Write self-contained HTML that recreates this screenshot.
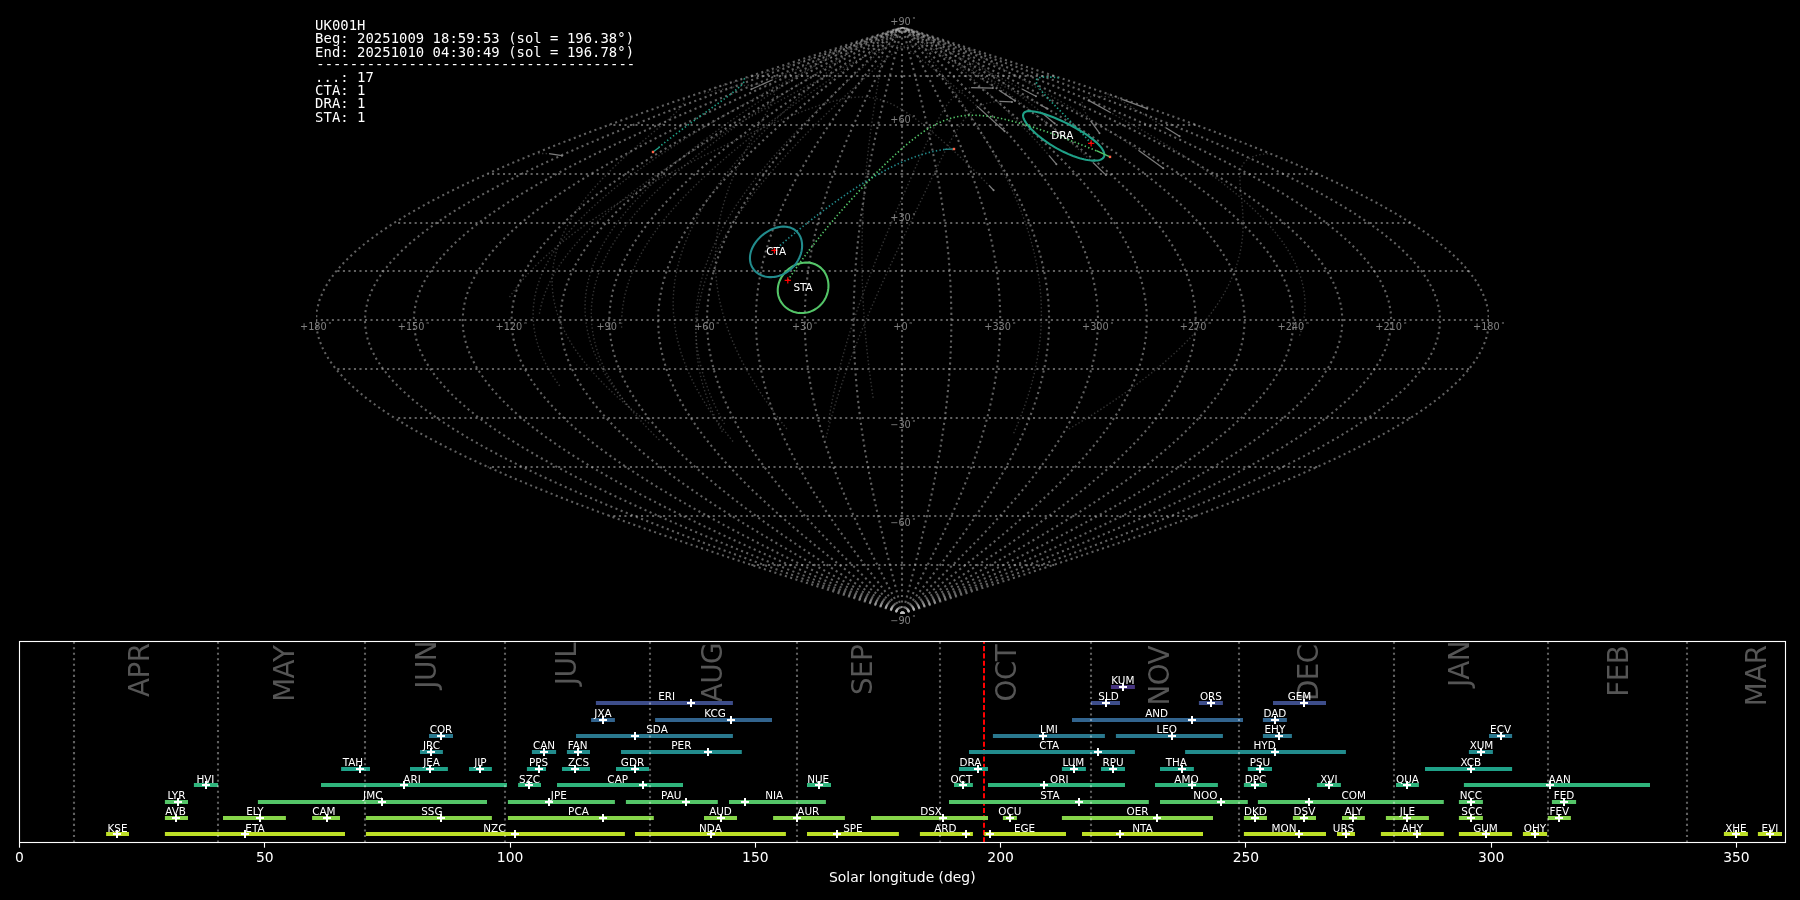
<!DOCTYPE html>
<html lang="en"><head><meta charset="utf-8"><title>UK001H shower association</title>
<style>
html,body{margin:0;padding:0;background:#000;}
body{width:1800px;height:900px;overflow:hidden;}
svg{display:block;will-change:transform;}
</style></head><body>
<svg width="1800" height="900" viewBox="0 0 1800 900">
<defs><clipPath id="skyclip"><rect x="316" y="27.5" width="1173" height="586.5"/></clipPath></defs>
<rect width="1800" height="900" fill="#000000"/>
<g id="skygrid" fill="none" stroke="#c0c0c0" stroke-opacity="0.5" stroke-width="2.08" stroke-dasharray="2.08 3.44" clip-path="url(#skyclip)">
<path d="M902 613.55 L902 603.77 L902 594 L902 584.22 L902 574.45 L902 564.67 L902 554.9 L902 545.12 L902 535.35 L902 525.57 L902 515.8 L902 506.02 L902 496.25 L902 486.47 L902 476.7 L902 466.92 L902 457.15 L902 447.37 L902 437.6 L902 427.82 L902 418.05 L902 408.27 L902 398.5 L902 388.72 L902 378.95 L902 369.17 L902 359.4 L902 349.62 L902 339.85 L902 330.07 L902 320.3 L902 310.53 L902 300.75 L902 290.98 L902 281.2 L902 271.43 L902 261.65 L902 251.88 L902 242.1 L902 232.33 L902 222.55 L902 212.78 L902 203 L902 193.23 L902 183.45 L902 173.68 L902 163.9 L902 154.13 L902 144.35 L902 134.58 L902 124.8 L902 115.03 L902 105.25 L902 95.48 L902 85.7 L902 75.93 L902 66.15 L902 56.38 L902 46.6 L902 36.83 L902 27.05"/>
<path d="M902.5 613.55 L899.94 603.77 L897.39 594 L894.85 584.22 L892.34 574.45 L889.85 564.67 L887.4 554.9 L884.98 545.12 L882.62 535.35 L880.31 525.57 L878.06 515.8 L875.88 506.02 L873.77 496.25 L871.74 486.47 L869.8 476.7 L867.94 466.92 L866.18 457.15 L864.52 447.37 L862.96 437.6 L861.51 427.82 L860.17 418.05 L858.95 408.27 L857.85 398.5 L856.87 388.72 L856.02 378.95 L855.29 369.17 L854.69 359.4 L854.23 349.62 L853.89 339.85 L853.69 330.07 L853.63 320.3 L853.69 310.53 L853.89 300.75 L854.23 290.98 L854.69 281.2 L855.29 271.43 L856.02 261.65 L856.87 251.88 L857.85 242.1 L858.95 232.33 L860.17 222.55 L861.51 212.78 L862.96 203 L864.52 193.23 L866.18 183.45 L867.94 173.68 L869.8 163.9 L871.74 154.13 L873.77 144.35 L875.88 134.58 L878.06 124.8 L880.31 115.03 L882.62 105.25 L884.98 95.48 L887.4 85.7 L889.85 75.93 L892.34 66.15 L894.85 56.38 L897.39 46.6 L899.94 36.83 L902.5 27.05"/>
<path d="M902.5 613.55 L897.38 603.77 L892.28 594 L887.21 584.22 L882.18 574.45 L877.2 564.67 L872.29 554.9 L867.47 545.12 L862.74 535.35 L858.12 525.57 L853.63 515.8 L849.26 506.02 L845.04 496.25 L840.98 486.47 L837.09 476.7 L833.38 466.92 L829.86 457.15 L826.53 447.37 L823.42 437.6 L820.52 427.82 L817.85 418.05 L815.41 408.27 L813.2 398.5 L811.24 388.72 L809.54 378.95 L808.08 369.17 L806.89 359.4 L805.95 349.62 L805.29 339.85 L804.88 330.07 L804.75 320.3 L804.88 310.53 L805.29 300.75 L805.95 290.98 L806.89 281.2 L808.08 271.43 L809.54 261.65 L811.24 251.88 L813.2 242.1 L815.41 232.33 L817.85 222.55 L820.52 212.78 L823.42 203 L826.53 193.23 L829.86 183.45 L833.38 173.68 L837.09 163.9 L840.98 154.13 L845.04 144.35 L849.26 134.58 L853.63 124.8 L858.12 115.03 L862.74 105.25 L867.47 95.48 L872.29 85.7 L877.2 75.93 L882.18 66.15 L887.21 56.38 L892.28 46.6 L897.38 36.83 L902.5 27.05"/>
<path d="M902.5 613.55 L894.83 603.77 L887.17 594 L879.56 584.22 L872.02 574.45 L864.55 564.67 L857.19 554.9 L849.95 545.12 L842.86 535.35 L835.93 525.57 L829.19 515.8 L822.64 506.02 L816.32 496.25 L810.23 486.47 L804.39 476.7 L798.82 466.92 L793.54 457.15 L788.55 447.37 L783.88 437.6 L779.53 427.82 L775.52 418.05 L771.86 408.27 L768.55 398.5 L765.62 388.72 L763.05 378.95 L760.87 369.17 L759.08 359.4 L757.68 349.62 L756.68 339.85 L756.08 330.07 L755.88 320.3 L756.08 310.53 L756.68 300.75 L757.68 290.98 L759.08 281.2 L760.87 271.43 L763.05 261.65 L765.62 251.88 L768.55 242.1 L771.86 232.33 L775.52 222.55 L779.53 212.78 L783.88 203 L788.55 193.23 L793.54 183.45 L798.82 173.68 L804.39 163.9 L810.23 154.13 L816.32 144.35 L822.64 134.58 L829.19 124.8 L835.93 115.03 L842.86 105.25 L849.95 95.48 L857.19 85.7 L864.55 75.93 L872.02 66.15 L879.56 56.38 L887.17 46.6 L894.83 36.83 L902.5 27.05"/>
<path d="M902.5 613.55 L892.27 603.77 L882.06 594 L871.92 584.22 L861.85 574.45 L851.9 564.67 L842.09 554.9 L832.44 545.12 L822.98 535.35 L813.75 525.57 L804.75 515.8 L796.02 506.02 L787.59 496.25 L779.47 486.47 L771.69 476.7 L764.26 466.92 L757.22 457.15 L750.57 447.37 L744.34 437.6 L738.54 427.82 L733.19 418.05 L728.31 408.27 L723.9 398.5 L719.99 388.72 L716.57 378.95 L713.66 369.17 L711.27 359.4 L709.41 349.62 L708.07 339.85 L707.27 330.07 L707 320.3 L707.27 310.53 L708.07 300.75 L709.41 290.98 L711.27 281.2 L713.66 271.43 L716.57 261.65 L719.99 251.88 L723.9 242.1 L728.31 232.33 L733.19 222.55 L738.54 212.78 L744.34 203 L750.57 193.23 L757.22 183.45 L764.26 173.68 L771.69 163.9 L779.47 154.13 L787.59 144.35 L796.02 134.58 L804.75 124.8 L813.75 115.03 L822.98 105.25 L832.44 95.48 L842.09 85.7 L851.9 75.93 L861.85 66.15 L871.92 56.38 L882.06 46.6 L892.27 36.83 L902.5 27.05"/>
<path d="M902.5 613.55 L889.71 603.77 L876.96 594 L864.27 584.22 L851.69 574.45 L839.25 564.67 L826.98 554.9 L814.92 545.12 L803.1 535.35 L791.56 525.57 L780.31 515.8 L769.41 506.02 L758.86 496.25 L748.71 486.47 L738.98 476.7 L729.7 466.92 L720.9 457.15 L712.59 447.37 L704.8 437.6 L697.55 427.82 L690.87 418.05 L684.76 408.27 L679.25 398.5 L674.36 388.72 L670.09 378.95 L666.45 369.17 L663.47 359.4 L661.14 349.62 L659.47 339.85 L658.46 330.07 L658.13 320.3 L658.46 310.53 L659.47 300.75 L661.14 290.98 L663.47 281.2 L666.45 271.43 L670.09 261.65 L674.36 251.88 L679.25 242.1 L684.76 232.33 L690.87 222.55 L697.55 212.78 L704.8 203 L712.59 193.23 L720.9 183.45 L729.7 173.68 L738.98 163.9 L748.71 154.13 L758.86 144.35 L769.41 134.58 L780.31 124.8 L791.56 115.03 L803.1 105.25 L814.92 95.48 L826.98 85.7 L839.25 75.93 L851.69 66.15 L864.27 56.38 L876.96 46.6 L889.71 36.83 L902.5 27.05"/>
<path d="M902.5 613.55 L887.15 603.77 L871.85 594 L856.63 584.22 L841.53 574.45 L826.6 564.67 L811.88 554.9 L797.41 545.12 L783.23 535.35 L769.37 525.57 L755.88 515.8 L742.79 506.02 L730.13 496.25 L717.95 486.47 L706.28 476.7 L695.14 466.92 L684.58 457.15 L674.6 447.37 L665.26 437.6 L656.56 427.82 L648.54 418.05 L641.22 408.27 L634.61 398.5 L628.73 388.72 L623.61 378.95 L619.25 369.17 L615.66 359.4 L612.86 349.62 L610.86 339.85 L609.65 330.07 L609.25 320.3 L609.65 310.53 L610.86 300.75 L612.86 290.98 L615.66 281.2 L619.25 271.43 L623.61 261.65 L628.73 251.88 L634.61 242.1 L641.22 232.33 L648.54 222.55 L656.56 212.78 L665.26 203 L674.6 193.23 L684.58 183.45 L695.14 173.68 L706.28 163.9 L717.95 154.13 L730.13 144.35 L742.79 134.58 L755.88 124.8 L769.37 115.03 L783.23 105.25 L797.41 95.48 L811.88 85.7 L826.6 75.93 L841.53 66.15 L856.63 56.38 L871.85 46.6 L887.15 36.83 L902.5 27.05"/>
<path d="M902.5 613.55 L884.59 603.77 L866.74 594 L848.98 584.22 L831.37 574.45 L813.95 564.67 L796.78 554.9 L779.89 545.12 L763.35 535.35 L747.18 525.57 L731.44 515.8 L716.17 506.02 L701.41 496.25 L687.2 486.47 L673.58 476.7 L660.58 466.92 L648.25 457.15 L636.62 447.37 L625.72 437.6 L615.57 427.82 L606.21 418.05 L597.67 408.27 L589.96 398.5 L583.1 388.72 L577.12 378.95 L572.04 369.17 L567.85 359.4 L564.59 349.62 L562.25 339.85 L560.85 330.07 L560.38 320.3 L560.85 310.53 L562.25 300.75 L564.59 290.98 L567.85 281.2 L572.04 271.43 L577.12 261.65 L583.1 251.88 L589.96 242.1 L597.67 232.33 L606.21 222.55 L615.57 212.78 L625.72 203 L636.62 193.23 L648.25 183.45 L660.58 173.68 L673.58 163.9 L687.2 154.13 L701.41 144.35 L716.17 134.58 L731.44 124.8 L747.18 115.03 L763.35 105.25 L779.89 95.48 L796.78 85.7 L813.95 75.93 L831.37 66.15 L848.98 56.38 L866.74 46.6 L884.59 36.83 L902.5 27.05"/>
<path d="M902.5 613.55 L882.04 603.77 L861.63 594 L841.33 584.22 L821.21 574.45 L801.3 564.67 L781.68 554.9 L762.38 545.12 L743.47 535.35 L724.99 525.57 L707 515.8 L689.55 506.02 L672.68 496.25 L656.44 486.47 L640.87 476.7 L626.02 466.92 L611.93 457.15 L598.64 447.37 L586.18 437.6 L574.58 427.82 L563.89 418.05 L554.12 408.27 L545.31 398.5 L537.47 388.72 L530.64 378.95 L524.83 369.17 L520.05 359.4 L516.32 349.62 L513.65 339.85 L512.04 330.07 L511.5 320.3 L512.04 310.53 L513.65 300.75 L516.32 290.98 L520.05 281.2 L524.83 271.43 L530.64 261.65 L537.47 251.88 L545.31 242.1 L554.12 232.33 L563.89 222.55 L574.58 212.78 L586.18 203 L598.64 193.23 L611.93 183.45 L626.02 173.68 L640.87 163.9 L656.44 154.13 L672.68 144.35 L689.55 134.58 L707 124.8 L724.99 115.03 L743.47 105.25 L762.38 95.48 L781.68 85.7 L801.3 75.93 L821.21 66.15 L841.33 56.38 L861.63 46.6 L882.04 36.83 L902.5 27.05"/>
<path d="M902.5 613.55 L879.48 603.77 L856.52 594 L833.69 584.22 L811.05 574.45 L788.65 564.67 L766.57 554.9 L744.86 545.12 L723.59 535.35 L702.8 525.57 L682.56 515.8 L662.93 506.02 L643.95 496.25 L625.68 486.47 L608.17 476.7 L591.46 466.92 L575.61 457.15 L560.66 447.37 L546.64 437.6 L533.59 427.82 L521.56 418.05 L510.57 408.27 L500.66 398.5 L491.85 388.72 L484.16 378.95 L477.62 369.17 L472.24 359.4 L468.05 349.62 L465.04 339.85 L463.23 330.07 L462.63 320.3 L463.23 310.53 L465.04 300.75 L468.05 290.98 L472.24 281.2 L477.62 271.43 L484.16 261.65 L491.85 251.88 L500.66 242.1 L510.57 232.33 L521.56 222.55 L533.59 212.78 L546.64 203 L560.66 193.23 L575.61 183.45 L591.46 173.68 L608.17 163.9 L625.68 154.13 L643.95 144.35 L662.93 134.58 L682.56 124.8 L702.8 115.03 L723.59 105.25 L744.86 95.48 L766.57 85.7 L788.65 75.93 L811.05 66.15 L833.69 56.38 L856.52 46.6 L879.48 36.83 L902.5 27.05"/>
<path d="M902.5 613.55 L876.92 603.77 L851.41 594 L826.04 584.22 L800.88 574.45 L776 564.67 L751.47 554.9 L727.35 545.12 L703.71 535.35 L680.61 525.57 L658.13 515.8 L636.31 506.02 L615.22 496.25 L594.92 486.47 L575.47 476.7 L556.91 466.92 L539.29 457.15 L522.67 447.37 L507.1 437.6 L492.6 427.82 L479.23 418.05 L467.03 408.27 L456.01 398.5 L446.22 388.72 L437.68 378.95 L430.41 369.17 L424.44 359.4 L419.77 349.62 L416.43 339.85 L414.42 330.07 L413.75 320.3 L414.42 310.53 L416.43 300.75 L419.77 290.98 L424.44 281.2 L430.41 271.43 L437.68 261.65 L446.22 251.88 L456.01 242.1 L467.03 232.33 L479.23 222.55 L492.6 212.78 L507.1 203 L522.67 193.23 L539.29 183.45 L556.91 173.68 L575.47 163.9 L594.92 154.13 L615.22 144.35 L636.31 134.58 L658.13 124.8 L680.61 115.03 L703.71 105.25 L727.35 95.48 L751.47 85.7 L776 75.93 L800.88 66.15 L826.04 56.38 L851.41 46.6 L876.92 36.83 L902.5 27.05"/>
<path d="M902.5 613.55 L874.36 603.77 L846.3 594 L818.4 584.22 L790.72 574.45 L763.35 564.67 L736.37 554.9 L709.83 545.12 L683.83 535.35 L658.43 525.57 L633.69 515.8 L609.69 506.02 L586.5 496.25 L564.17 486.47 L542.76 476.7 L522.35 466.92 L502.97 457.15 L484.69 447.37 L467.56 437.6 L451.61 427.82 L436.91 418.05 L423.48 408.27 L411.36 398.5 L400.59 388.72 L391.19 378.95 L383.2 369.17 L376.63 359.4 L371.5 349.62 L367.83 339.85 L365.62 330.07 L364.88 320.3 L365.62 310.53 L367.83 300.75 L371.5 290.98 L376.63 281.2 L383.2 271.43 L391.19 261.65 L400.59 251.88 L411.36 242.1 L423.48 232.33 L436.91 222.55 L451.61 212.78 L467.56 203 L484.69 193.23 L502.97 183.45 L522.35 173.68 L542.76 163.9 L564.17 154.13 L586.5 144.35 L609.69 134.58 L633.69 124.8 L658.43 115.03 L683.83 105.25 L709.83 95.48 L736.37 85.7 L763.35 75.93 L790.72 66.15 L818.4 56.38 L846.3 46.6 L874.36 36.83 L902.5 27.05"/>
<path d="M902.5 613.55 L871.81 603.77 L841.19 594 L810.75 584.22 L780.56 574.45 L750.7 564.67 L721.26 554.9 L692.32 545.12 L663.95 535.35 L636.24 525.57 L609.25 515.8 L583.07 506.02 L557.77 496.25 L533.41 486.47 L510.06 476.7 L487.79 466.92 L466.65 457.15 L446.71 447.37 L428.02 437.6 L410.62 427.82 L394.58 418.05 L379.93 408.27 L366.71 398.5 L354.96 388.72 L344.71 378.95 L335.99 369.17 L328.82 359.4 L323.23 349.62 L319.22 339.85 L316.81 330.07 L316.01 320.3 L316.81 310.53 L319.22 300.75 L323.23 290.98 L328.82 281.2 L335.99 271.43 L344.71 261.65 L354.96 251.88 L366.71 242.1 L379.93 232.33 L394.58 222.55 L410.62 212.78 L428.02 203 L446.71 193.23 L466.65 183.45 L487.79 173.68 L510.06 163.9 L533.41 154.13 L557.77 144.35 L583.07 134.58 L609.25 124.8 L636.24 115.03 L663.95 105.25 L692.32 95.48 L721.26 85.7 L750.7 75.93 L780.56 66.15 L810.75 56.38 L841.19 46.6 L871.81 36.83 L902.5 27.05"/>
<path d="M902.5 613.55 L933.19 603.77 L963.81 594 L994.25 584.22 L1024.44 574.45 L1054.3 564.67 L1083.74 554.9 L1112.68 545.12 L1141.05 535.35 L1168.76 525.57 L1195.75 515.8 L1221.93 506.02 L1247.23 496.25 L1271.59 486.47 L1294.94 476.7 L1317.21 466.92 L1338.35 457.15 L1358.29 447.37 L1376.98 437.6 L1394.37 427.82 L1410.42 418.05 L1425.07 408.27 L1438.29 398.5 L1450.04 388.72 L1460.29 378.95 L1469.01 369.17 L1476.18 359.4 L1481.77 349.62 L1485.78 339.85 L1488.19 330.07 L1488.99 320.3 L1488.19 310.53 L1485.78 300.75 L1481.77 290.98 L1476.18 281.2 L1469.01 271.43 L1460.29 261.65 L1450.04 251.88 L1438.29 242.1 L1425.07 232.33 L1410.42 222.55 L1394.37 212.78 L1376.98 203 L1358.29 193.23 L1338.35 183.45 L1317.21 173.68 L1294.94 163.9 L1271.59 154.13 L1247.23 144.35 L1221.93 134.58 L1195.75 124.8 L1168.76 115.03 L1141.05 105.25 L1112.68 95.48 L1083.74 85.7 L1054.3 75.93 L1024.44 66.15 L994.25 56.38 L963.81 46.6 L933.19 36.83 L902.5 27.05"/>
<path d="M902.5 613.55 L930.64 603.77 L958.7 594 L986.6 584.22 L1014.28 574.45 L1041.65 564.67 L1068.63 554.9 L1095.17 545.12 L1121.17 535.35 L1146.57 525.57 L1171.31 515.8 L1195.31 506.02 L1218.5 496.25 L1240.83 486.47 L1262.24 476.7 L1282.65 466.92 L1302.03 457.15 L1320.31 447.37 L1337.44 437.6 L1353.39 427.82 L1368.09 418.05 L1381.52 408.27 L1393.64 398.5 L1404.41 388.72 L1413.81 378.95 L1421.8 369.17 L1428.37 359.4 L1433.5 349.62 L1437.17 339.85 L1439.38 330.07 L1440.12 320.3 L1439.38 310.53 L1437.17 300.75 L1433.5 290.98 L1428.37 281.2 L1421.8 271.43 L1413.81 261.65 L1404.41 251.88 L1393.64 242.1 L1381.52 232.33 L1368.09 222.55 L1353.39 212.78 L1337.44 203 L1320.31 193.23 L1302.03 183.45 L1282.65 173.68 L1262.24 163.9 L1240.83 154.13 L1218.5 144.35 L1195.31 134.58 L1171.31 124.8 L1146.57 115.03 L1121.17 105.25 L1095.17 95.48 L1068.63 85.7 L1041.65 75.93 L1014.28 66.15 L986.6 56.38 L958.7 46.6 L930.64 36.83 L902.5 27.05"/>
<path d="M902.5 613.55 L928.08 603.77 L953.59 594 L978.96 584.22 L1004.12 574.45 L1029 564.67 L1053.53 554.9 L1077.65 545.12 L1101.29 535.35 L1124.39 525.57 L1146.87 515.8 L1168.69 506.02 L1189.78 496.25 L1210.08 486.47 L1229.53 476.7 L1248.09 466.92 L1265.71 457.15 L1282.33 447.37 L1297.9 437.6 L1312.4 427.82 L1325.77 418.05 L1337.97 408.27 L1348.99 398.5 L1358.78 388.72 L1367.32 378.95 L1374.59 369.17 L1380.56 359.4 L1385.23 349.62 L1388.57 339.85 L1390.58 330.07 L1391.24 320.3 L1390.58 310.53 L1388.57 300.75 L1385.23 290.98 L1380.56 281.2 L1374.59 271.43 L1367.32 261.65 L1358.78 251.88 L1348.99 242.1 L1337.97 232.33 L1325.77 222.55 L1312.4 212.78 L1297.9 203 L1282.33 193.23 L1265.71 183.45 L1248.09 173.68 L1229.53 163.9 L1210.08 154.13 L1189.78 144.35 L1168.69 134.58 L1146.87 124.8 L1124.39 115.03 L1101.29 105.25 L1077.65 95.48 L1053.53 85.7 L1029 75.93 L1004.12 66.15 L978.96 56.38 L953.59 46.6 L928.08 36.83 L902.5 27.05"/>
<path d="M902.5 613.55 L925.52 603.77 L948.48 594 L971.31 584.22 L993.95 574.45 L1016.35 564.67 L1038.43 554.9 L1060.14 545.12 L1081.41 535.35 L1102.2 525.57 L1122.44 515.8 L1142.07 506.02 L1161.05 496.25 L1179.32 486.47 L1196.83 476.7 L1213.54 466.92 L1229.39 457.15 L1244.34 447.37 L1258.36 437.6 L1271.41 427.82 L1283.44 418.05 L1294.43 408.27 L1304.34 398.5 L1313.15 388.72 L1320.84 378.95 L1327.38 369.17 L1332.76 359.4 L1336.95 349.62 L1339.96 339.85 L1341.77 330.07 L1342.37 320.3 L1341.77 310.53 L1339.96 300.75 L1336.95 290.98 L1332.76 281.2 L1327.38 271.43 L1320.84 261.65 L1313.15 251.88 L1304.34 242.1 L1294.43 232.33 L1283.44 222.55 L1271.41 212.78 L1258.36 203 L1244.34 193.23 L1229.39 183.45 L1213.54 173.68 L1196.83 163.9 L1179.32 154.13 L1161.05 144.35 L1142.07 134.58 L1122.44 124.8 L1102.2 115.03 L1081.41 105.25 L1060.14 95.48 L1038.43 85.7 L1016.35 75.93 L993.95 66.15 L971.31 56.38 L948.48 46.6 L925.52 36.83 L902.5 27.05"/>
<path d="M902.5 613.55 L922.96 603.77 L943.37 594 L963.67 584.22 L983.79 574.45 L1003.7 564.67 L1023.32 554.9 L1042.62 545.12 L1061.53 535.35 L1080.01 525.57 L1098 515.8 L1115.45 506.02 L1132.32 496.25 L1148.56 486.47 L1164.13 476.7 L1178.98 466.92 L1193.07 457.15 L1206.36 447.37 L1218.82 437.6 L1230.42 427.82 L1241.11 418.05 L1250.88 408.27 L1259.69 398.5 L1267.53 388.72 L1274.36 378.95 L1280.17 369.17 L1284.95 359.4 L1288.68 349.62 L1291.35 339.85 L1292.96 330.07 L1293.5 320.3 L1292.96 310.53 L1291.35 300.75 L1288.68 290.98 L1284.95 281.2 L1280.17 271.43 L1274.36 261.65 L1267.53 251.88 L1259.69 242.1 L1250.88 232.33 L1241.11 222.55 L1230.42 212.78 L1218.82 203 L1206.36 193.23 L1193.07 183.45 L1178.98 173.68 L1164.13 163.9 L1148.56 154.13 L1132.32 144.35 L1115.45 134.58 L1098 124.8 L1080.01 115.03 L1061.53 105.25 L1042.62 95.48 L1023.32 85.7 L1003.7 75.93 L983.79 66.15 L963.67 56.38 L943.37 46.6 L922.96 36.83 L902.5 27.05"/>
<path d="M902.5 613.55 L920.41 603.77 L938.26 594 L956.02 584.22 L973.63 574.45 L991.05 564.67 L1008.22 554.9 L1025.11 545.12 L1041.65 535.35 L1057.82 525.57 L1073.56 515.8 L1088.83 506.02 L1103.59 496.25 L1117.8 486.47 L1131.42 476.7 L1144.42 466.92 L1156.75 457.15 L1168.38 447.37 L1179.28 437.6 L1189.43 427.82 L1198.79 418.05 L1207.33 408.27 L1215.04 398.5 L1221.9 388.72 L1227.88 378.95 L1232.96 369.17 L1237.15 359.4 L1240.41 349.62 L1242.75 339.85 L1244.15 330.07 L1244.62 320.3 L1244.15 310.53 L1242.75 300.75 L1240.41 290.98 L1237.15 281.2 L1232.96 271.43 L1227.88 261.65 L1221.9 251.88 L1215.04 242.1 L1207.33 232.33 L1198.79 222.55 L1189.43 212.78 L1179.28 203 L1168.38 193.23 L1156.75 183.45 L1144.42 173.68 L1131.42 163.9 L1117.8 154.13 L1103.59 144.35 L1088.83 134.58 L1073.56 124.8 L1057.82 115.03 L1041.65 105.25 L1025.11 95.48 L1008.22 85.7 L991.05 75.93 L973.63 66.15 L956.02 56.38 L938.26 46.6 L920.41 36.83 L902.5 27.05"/>
<path d="M902.5 613.55 L917.85 603.77 L933.15 594 L948.37 584.22 L963.47 574.45 L978.4 564.67 L993.12 554.9 L1007.59 545.12 L1021.77 535.35 L1035.63 525.57 L1049.12 515.8 L1062.21 506.02 L1074.87 496.25 L1087.05 486.47 L1098.72 476.7 L1109.86 466.92 L1120.42 457.15 L1130.4 447.37 L1139.74 437.6 L1148.44 427.82 L1156.46 418.05 L1163.78 408.27 L1170.39 398.5 L1176.27 388.72 L1181.39 378.95 L1185.75 369.17 L1189.34 359.4 L1192.14 349.62 L1194.14 339.85 L1195.35 330.07 L1195.75 320.3 L1195.35 310.53 L1194.14 300.75 L1192.14 290.98 L1189.34 281.2 L1185.75 271.43 L1181.39 261.65 L1176.27 251.88 L1170.39 242.1 L1163.78 232.33 L1156.46 222.55 L1148.44 212.78 L1139.74 203 L1130.4 193.23 L1120.42 183.45 L1109.86 173.68 L1098.72 163.9 L1087.05 154.13 L1074.87 144.35 L1062.21 134.58 L1049.12 124.8 L1035.63 115.03 L1021.77 105.25 L1007.59 95.48 L993.12 85.7 L978.4 75.93 L963.47 66.15 L948.37 56.38 L933.15 46.6 L917.85 36.83 L902.5 27.05"/>
<path d="M902.5 613.55 L915.29 603.77 L928.04 594 L940.73 584.22 L953.31 574.45 L965.75 564.67 L978.02 554.9 L990.08 545.12 L1001.9 535.35 L1013.44 525.57 L1024.69 515.8 L1035.59 506.02 L1046.14 496.25 L1056.29 486.47 L1066.02 476.7 L1075.3 466.92 L1084.1 457.15 L1092.41 447.37 L1100.2 437.6 L1107.45 427.82 L1114.13 418.05 L1120.24 408.27 L1125.75 398.5 L1130.64 388.72 L1134.91 378.95 L1138.55 369.17 L1141.53 359.4 L1143.86 349.62 L1145.53 339.85 L1146.54 330.07 L1146.87 320.3 L1146.54 310.53 L1145.53 300.75 L1143.86 290.98 L1141.53 281.2 L1138.55 271.43 L1134.91 261.65 L1130.64 251.88 L1125.75 242.1 L1120.24 232.33 L1114.13 222.55 L1107.45 212.78 L1100.2 203 L1092.41 193.23 L1084.1 183.45 L1075.3 173.68 L1066.02 163.9 L1056.29 154.13 L1046.14 144.35 L1035.59 134.58 L1024.69 124.8 L1013.44 115.03 L1001.9 105.25 L990.08 95.48 L978.02 85.7 L965.75 75.93 L953.31 66.15 L940.73 56.38 L928.04 46.6 L915.29 36.83 L902.5 27.05"/>
<path d="M902.5 613.55 L912.73 603.77 L922.94 594 L933.08 584.22 L943.15 574.45 L953.1 564.67 L962.91 554.9 L972.56 545.12 L982.02 535.35 L991.25 525.57 L1000.25 515.8 L1008.98 506.02 L1017.41 496.25 L1025.53 486.47 L1033.31 476.7 L1040.74 466.92 L1047.78 457.15 L1054.43 447.37 L1060.66 437.6 L1066.46 427.82 L1071.81 418.05 L1076.69 408.27 L1081.1 398.5 L1085.01 388.72 L1088.43 378.95 L1091.34 369.17 L1093.73 359.4 L1095.59 349.62 L1096.93 339.85 L1097.73 330.07 L1098 320.3 L1097.73 310.53 L1096.93 300.75 L1095.59 290.98 L1093.73 281.2 L1091.34 271.43 L1088.43 261.65 L1085.01 251.88 L1081.1 242.1 L1076.69 232.33 L1071.81 222.55 L1066.46 212.78 L1060.66 203 L1054.43 193.23 L1047.78 183.45 L1040.74 173.68 L1033.31 163.9 L1025.53 154.13 L1017.41 144.35 L1008.98 134.58 L1000.25 124.8 L991.25 115.03 L982.02 105.25 L972.56 95.48 L962.91 85.7 L953.1 75.93 L943.15 66.15 L933.08 56.38 L922.94 46.6 L912.73 36.83 L902.5 27.05"/>
<path d="M902.5 613.55 L910.17 603.77 L917.83 594 L925.44 584.22 L932.98 574.45 L940.45 564.67 L947.81 554.9 L955.05 545.12 L962.14 535.35 L969.07 525.57 L975.81 515.8 L982.36 506.02 L988.68 496.25 L994.77 486.47 L1000.61 476.7 L1006.18 466.92 L1011.46 457.15 L1016.45 447.37 L1021.12 437.6 L1025.47 427.82 L1029.48 418.05 L1033.14 408.27 L1036.45 398.5 L1039.38 388.72 L1041.95 378.95 L1044.13 369.17 L1045.92 359.4 L1047.32 349.62 L1048.32 339.85 L1048.92 330.07 L1049.12 320.3 L1048.92 310.53 L1048.32 300.75 L1047.32 290.98 L1045.92 281.2 L1044.13 271.43 L1041.95 261.65 L1039.38 251.88 L1036.45 242.1 L1033.14 232.33 L1029.48 222.55 L1025.47 212.78 L1021.12 203 L1016.45 193.23 L1011.46 183.45 L1006.18 173.68 L1000.61 163.9 L994.77 154.13 L988.68 144.35 L982.36 134.58 L975.81 124.8 L969.07 115.03 L962.14 105.25 L955.05 95.48 L947.81 85.7 L940.45 75.93 L932.98 66.15 L925.44 56.38 L917.83 46.6 L910.17 36.83 L902.5 27.05"/>
<path d="M902.5 613.55 L907.62 603.77 L912.72 594 L917.79 584.22 L922.82 574.45 L927.8 564.67 L932.71 554.9 L937.53 545.12 L942.26 535.35 L946.88 525.57 L951.37 515.8 L955.74 506.02 L959.96 496.25 L964.02 486.47 L967.91 476.7 L971.62 466.92 L975.14 457.15 L978.47 447.37 L981.58 437.6 L984.48 427.82 L987.15 418.05 L989.59 408.27 L991.8 398.5 L993.76 388.72 L995.46 378.95 L996.92 369.17 L998.11 359.4 L999.05 349.62 L999.71 339.85 L1000.12 330.07 L1000.25 320.3 L1000.12 310.53 L999.71 300.75 L999.05 290.98 L998.11 281.2 L996.92 271.43 L995.46 261.65 L993.76 251.88 L991.8 242.1 L989.59 232.33 L987.15 222.55 L984.48 212.78 L981.58 203 L978.47 193.23 L975.14 183.45 L971.62 173.68 L967.91 163.9 L964.02 154.13 L959.96 144.35 L955.74 134.58 L951.37 124.8 L946.88 115.03 L942.26 105.25 L937.53 95.48 L932.71 85.7 L927.8 75.93 L922.82 66.15 L917.79 56.38 L912.72 46.6 L907.62 36.83 L902.5 27.05"/>
<path d="M902.5 613.55 L905.06 603.77 L907.61 594 L910.15 584.22 L912.66 574.45 L915.15 564.67 L917.6 554.9 L920.02 545.12 L922.38 535.35 L924.69 525.57 L926.94 515.8 L929.12 506.02 L931.23 496.25 L933.26 486.47 L935.2 476.7 L937.06 466.92 L938.82 457.15 L940.48 447.37 L942.04 437.6 L943.49 427.82 L944.83 418.05 L946.05 408.27 L947.15 398.5 L948.13 388.72 L948.98 378.95 L949.71 369.17 L950.31 359.4 L950.77 349.62 L951.11 339.85 L951.31 330.07 L951.37 320.3 L951.31 310.53 L951.11 300.75 L950.77 290.98 L950.31 281.2 L949.71 271.43 L948.98 261.65 L948.13 251.88 L947.15 242.1 L946.05 232.33 L944.83 222.55 L943.49 212.78 L942.04 203 L940.48 193.23 L938.82 183.45 L937.06 173.68 L935.2 163.9 L933.26 154.13 L931.23 144.35 L929.12 134.58 L926.94 124.8 L924.69 115.03 L922.38 105.25 L920.02 95.48 L917.6 85.7 L915.15 75.93 L912.66 66.15 L910.15 56.38 L907.61 46.6 L905.06 36.83 L902.5 27.05"/>
<path d="M902.5 614 L902.5 614 L902.5 614 L902.5 614 L902.5 614 L902.5 614 L902.5 614 L902.5 614 L902.5 614 L902.5 614 L902.5 614 L902.5 614 L902.5 614"/>
<path d="M902.5 614 L902.5 614 L902.5 614 L902.5 614 L902.5 614 L902.5 614 L902.5 614 L902.5 614 L902.5 614 L902.5 614 L902.5 614 L902.5 614 L902.5 614"/>
<path d="M902.5 565 L889.85 565 L877.2 565 L864.55 565 L851.9 565 L839.25 565 L826.6 565 L813.95 565 L801.3 565 L788.65 565 L776 565 L763.35 565 L750.7 565"/>
<path d="M1054.3 565 L1041.65 565 L1029 565 L1016.35 565 L1003.7 565 L991.05 565 L978.4 565 L965.75 565 L953.1 565 L940.45 565 L927.8 565 L915.15 565 L902.5 565"/>
<path d="M902.5 516 L878.06 516 L853.63 516 L829.19 516 L804.75 516 L780.31 516 L755.88 516 L731.44 516 L707 516 L682.56 516 L658.13 516 L633.69 516 L609.25 516"/>
<path d="M1195.75 516 L1171.31 516 L1146.87 516 L1122.44 516 L1098 516 L1073.56 516 L1049.12 516 L1024.69 516 L1000.25 516 L975.81 516 L951.37 516 L926.94 516 L902.5 516"/>
<path d="M902.5 467 L867.94 467 L833.38 467 L798.82 467 L764.26 467 L729.7 467 L695.14 467 L660.58 467 L626.02 467 L591.46 467 L556.91 467 L522.35 467 L487.79 467"/>
<path d="M1317.21 467 L1282.65 467 L1248.09 467 L1213.54 467 L1178.98 467 L1144.42 467 L1109.86 467 L1075.3 467 L1040.74 467 L1006.18 467 L971.62 467 L937.06 467 L902.5 467"/>
<path d="M902.5 418 L860.17 418 L817.85 418 L775.52 418 L733.19 418 L690.87 418 L648.54 418 L606.21 418 L563.89 418 L521.56 418 L479.23 418 L436.91 418 L394.58 418"/>
<path d="M1410.42 418 L1368.09 418 L1325.77 418 L1283.44 418 L1241.11 418 L1198.79 418 L1156.46 418 L1114.13 418 L1071.81 418 L1029.48 418 L987.15 418 L944.83 418 L902.5 418"/>
<path d="M902.5 369 L855.29 369 L808.08 369 L760.87 369 L713.66 369 L666.45 369 L619.25 369 L572.04 369 L524.83 369 L477.62 369 L430.41 369 L383.2 369 L335.99 369"/>
<path d="M1469.01 369 L1421.8 369 L1374.59 369 L1327.38 369 L1280.17 369 L1232.96 369 L1185.75 369 L1138.55 369 L1091.34 369 L1044.13 369 L996.92 369 L949.71 369 L902.5 369"/>
<path d="M902.5 320 L853.63 320 L804.75 320 L755.88 320 L707 320 L658.13 320 L609.25 320 L560.38 320 L511.5 320 L462.63 320 L413.75 320 L364.88 320 L316.01 320"/>
<path d="M1488.99 320 L1440.12 320 L1391.24 320 L1342.37 320 L1293.5 320 L1244.62 320 L1195.75 320 L1146.87 320 L1098 320 L1049.12 320 L1000.25 320 L951.37 320 L902.5 320"/>
<path d="M902.5 271 L855.29 271 L808.08 271 L760.87 271 L713.66 271 L666.45 271 L619.25 271 L572.04 271 L524.83 271 L477.62 271 L430.41 271 L383.2 271 L335.99 271"/>
<path d="M1469.01 271 L1421.8 271 L1374.59 271 L1327.38 271 L1280.17 271 L1232.96 271 L1185.75 271 L1138.55 271 L1091.34 271 L1044.13 271 L996.92 271 L949.71 271 L902.5 271"/>
<path d="M902.5 223 L860.17 223 L817.85 223 L775.52 223 L733.19 223 L690.87 223 L648.54 223 L606.21 223 L563.89 223 L521.56 223 L479.23 223 L436.91 223 L394.58 223"/>
<path d="M1410.42 223 L1368.09 223 L1325.77 223 L1283.44 223 L1241.11 223 L1198.79 223 L1156.46 223 L1114.13 223 L1071.81 223 L1029.48 223 L987.15 223 L944.83 223 L902.5 223"/>
<path d="M902.5 174 L867.94 174 L833.38 174 L798.82 174 L764.26 174 L729.7 174 L695.14 174 L660.58 174 L626.02 174 L591.46 174 L556.91 174 L522.35 174 L487.79 174"/>
<path d="M1317.21 174 L1282.65 174 L1248.09 174 L1213.54 174 L1178.98 174 L1144.42 174 L1109.86 174 L1075.3 174 L1040.74 174 L1006.18 174 L971.62 174 L937.06 174 L902.5 174"/>
<path d="M902.5 125 L878.06 125 L853.63 125 L829.19 125 L804.75 125 L780.31 125 L755.88 125 L731.44 125 L707 125 L682.56 125 L658.13 125 L633.69 125 L609.25 125"/>
<path d="M1195.75 125 L1171.31 125 L1146.87 125 L1122.44 125 L1098 125 L1073.56 125 L1049.12 125 L1024.69 125 L1000.25 125 L975.81 125 L951.37 125 L926.94 125 L902.5 125"/>
<path d="M902.5 76 L889.85 76 L877.2 76 L864.55 76 L851.9 76 L839.25 76 L826.6 76 L813.95 76 L801.3 76 L788.65 76 L776 76 L763.35 76 L750.7 76"/>
<path d="M1054.3 76 L1041.65 76 L1029 76 L1016.35 76 L1003.7 76 L991.05 76 L978.4 76 L965.75 76 L953.1 76 L940.45 76 L927.8 76 L915.15 76 L902.5 76"/>
<path d="M902.5 27 L902.5 27 L902.5 27 L902.5 27 L902.5 27 L902.5 27 L902.5 27 L902.5 27 L902.5 27 L902.5 27 L902.5 27 L902.5 27 L902.5 27"/>
<path d="M902.5 27 L902.5 27 L902.5 27 L902.5 27 L902.5 27 L902.5 27 L902.5 27 L902.5 27 L902.5 27 L902.5 27 L902.5 27 L902.5 27 L902.5 27"/>
</g>
<g id="skyticks" font-family="'DejaVu Sans','Liberation Sans',sans-serif" font-size="9.72" fill="#808080" text-anchor="middle">
<text x="902.9" y="623.55">−90<tspan dx="1.4" dy="-3.3" font-size="6.81">°</tspan></text>
<text x="902.9" y="525.8">−60<tspan dx="1.4" dy="-3.3" font-size="6.81">°</tspan></text>
<text x="902.9" y="428.05">−30<tspan dx="1.4" dy="-3.3" font-size="6.81">°</tspan></text>
<text x="902.9" y="330.3">+0<tspan dx="1.4" dy="-3.3" font-size="6.81">°</tspan></text>
<text x="902.9" y="220.85">+30<tspan dx="1.4" dy="-3.3" font-size="6.81">°</tspan></text>
<text x="902.9" y="123.1">+60<tspan dx="1.4" dy="-3.3" font-size="6.81">°</tspan></text>
<text x="902.9" y="25.35">+90<tspan dx="1.4" dy="-3.3" font-size="6.81">°</tspan></text>
<text x="804.55" y="330.3">+30<tspan dx="1.4" dy="-3.3" font-size="6.81">°</tspan></text>
<text x="706.8" y="330.3">+60<tspan dx="1.4" dy="-3.3" font-size="6.81">°</tspan></text>
<text x="609.05" y="330.3">+90<tspan dx="1.4" dy="-3.3" font-size="6.81">°</tspan></text>
<text x="511.3" y="330.3">+120<tspan dx="1.4" dy="-3.3" font-size="6.81">°</tspan></text>
<text x="413.56" y="330.3">+150<tspan dx="1.4" dy="-3.3" font-size="6.81">°</tspan></text>
<text x="315.81" y="330.3">+180<tspan dx="1.4" dy="-3.3" font-size="6.81">°</tspan></text>
<text x="1391.04" y="330.3">+210<tspan dx="1.4" dy="-3.3" font-size="6.81">°</tspan></text>
<text x="1293.3" y="330.3">+240<tspan dx="1.4" dy="-3.3" font-size="6.81">°</tspan></text>
<text x="1195.55" y="330.3">+270<tspan dx="1.4" dy="-3.3" font-size="6.81">°</tspan></text>
<text x="1097.8" y="330.3">+300<tspan dx="1.4" dy="-3.3" font-size="6.81">°</tspan></text>
<text x="1000.05" y="330.3">+330<tspan dx="1.4" dy="-3.3" font-size="6.81">°</tspan></text>
<text x="1488.79" y="330.3">+180<tspan dx="1.4" dy="-3.3" font-size="6.81">°</tspan></text>
</g>
<g id="info" font-family="'DejaVu Sans Mono','Liberation Mono',monospace" font-size="13.89" fill="#ffffff" letter-spacing="0.04">
<text x="315.1" y="30">UK001H</text>
<text x="315.1" y="43">Beg: 20251009 18:59:53 (sol = 196.38°)</text>
<text x="315.1" y="57">End: 20251010 04:30:49 (sol = 196.78°)</text>
<text x="316.3" y="68.6">--------------------------------------</text>
<text x="315.1" y="82">...: 17</text>
<text x="315.1" y="95">CTA: 1</text>
<text x="315.1" y="108">DRA: 1</text>
<text x="315.1" y="122">STA: 1</text>
</g>
<g id="monthlabels" font-family="'DejaVu Sans','Liberation Sans',sans-serif" font-size="27.78" fill="#555555" text-anchor="end" letter-spacing="-0.5">
<text transform="translate(148.7 643.5) rotate(-90)">APR</text>
<text transform="translate(293.7 645.6) rotate(-90)">MAY</text>
<text transform="translate(435.7 640.9) rotate(-90)">JUN</text>
<text transform="translate(575.9 642.7) rotate(-90)">JUL</text>
<text transform="translate(722.3 643) rotate(-90)">AUG</text>
<text transform="translate(871.8 644.7) rotate(-90)">SEP</text>
<text transform="translate(1015.6 644.7) rotate(-90)">OCT</text>
<text transform="translate(1168.9 645.9) rotate(-90)">NOV</text>
<text transform="translate(1317.5 644.3) rotate(-90)">DEC</text>
<text transform="translate(1468.7 641.1) rotate(-90)">JAN</text>
<text transform="translate(1627.6 645.6) rotate(-90)">FEB</text>
<text transform="translate(1765.9 645.5) rotate(-90)">MAR</text>
</g>
<path d="M984 842.5 V641.5" stroke="#ff0000" stroke-width="2" stroke-dasharray="5.14 2.22" fill="none"/>
<g id="bars">
<rect x="106.1" y="832" width="22.9" height="4" fill="#bddf26"/>
<rect x="164.9" y="832" width="180.1" height="4" fill="#bddf26"/>
<rect x="365.9" y="832" width="259" height="4" fill="#bddf26"/>
<rect x="635" y="832" width="150.9" height="4" fill="#bddf26"/>
<rect x="807" y="832" width="91.9" height="4" fill="#bddf26"/>
<rect x="919.9" y="832" width="53" height="4" fill="#bddf26"/>
<rect x="984.3" y="832" width="81.7" height="4" fill="#bddf26"/>
<rect x="1082" y="832" width="121" height="4" fill="#bddf26"/>
<rect x="1243.9" y="832" width="82.1" height="4" fill="#bddf26"/>
<rect x="1337" y="832" width="18" height="4" fill="#bddf26"/>
<rect x="1380.9" y="832" width="62.9" height="4" fill="#bddf26"/>
<rect x="1458.9" y="832" width="53.2" height="4" fill="#bddf26"/>
<rect x="1522.9" y="832" width="24.2" height="4" fill="#bddf26"/>
<rect x="1723.9" y="832" width="24" height="4" fill="#bddf26"/>
<rect x="1757.9" y="832" width="24.1" height="4" fill="#bddf26"/>
<rect x="164.9" y="816" width="23.1" height="4" fill="#86d549"/>
<rect x="223" y="816" width="62.9" height="4" fill="#86d549"/>
<rect x="312.1" y="816" width="27.9" height="4" fill="#86d549"/>
<rect x="365.9" y="816" width="126" height="4" fill="#86d549"/>
<rect x="507.9" y="816" width="145.9" height="4" fill="#86d549"/>
<rect x="704" y="816" width="33" height="4" fill="#86d549"/>
<rect x="773.1" y="816" width="71.8" height="4" fill="#86d549"/>
<rect x="871" y="816" width="117" height="4" fill="#86d549"/>
<rect x="1002.9" y="816" width="14" height="4" fill="#86d549"/>
<rect x="1061.9" y="816" width="151.1" height="4" fill="#86d549"/>
<rect x="1243.9" y="816" width="23.1" height="4" fill="#86d549"/>
<rect x="1292.9" y="816" width="23.1" height="4" fill="#86d549"/>
<rect x="1342" y="816" width="22.9" height="4" fill="#86d549"/>
<rect x="1385.9" y="816" width="43" height="4" fill="#86d549"/>
<rect x="1458.9" y="816" width="24" height="4" fill="#86d549"/>
<rect x="1547.8" y="816" width="23.1" height="4" fill="#86d549"/>
<rect x="164.9" y="800" width="23.1" height="4" fill="#54c568"/>
<rect x="257.9" y="800" width="229.1" height="4" fill="#54c568"/>
<rect x="507.9" y="800" width="107" height="4" fill="#54c568"/>
<rect x="625.9" y="800" width="91.9" height="4" fill="#54c568"/>
<rect x="729" y="800" width="96.9" height="4" fill="#54c568"/>
<rect x="949" y="800" width="199.8" height="4" fill="#54c568"/>
<rect x="1160" y="800" width="87.8" height="4" fill="#54c568"/>
<rect x="1257.9" y="800" width="185.9" height="4" fill="#54c568"/>
<rect x="1458.9" y="800" width="24" height="4" fill="#54c568"/>
<rect x="1551.9" y="800" width="24.2" height="4" fill="#54c568"/>
<rect x="193.9" y="783" width="24.2" height="4" fill="#2fb47c"/>
<rect x="321" y="783" width="186" height="4" fill="#2fb47c"/>
<rect x="518.1" y="783" width="22.9" height="4" fill="#2fb47c"/>
<rect x="557" y="783" width="126" height="4" fill="#2fb47c"/>
<rect x="807" y="783" width="24" height="4" fill="#2fb47c"/>
<rect x="954" y="783" width="18.9" height="4" fill="#2fb47c"/>
<rect x="988" y="783" width="137" height="4" fill="#2fb47c"/>
<rect x="1155" y="783" width="62.9" height="4" fill="#2fb47c"/>
<rect x="1243.9" y="783" width="23.1" height="4" fill="#2fb47c"/>
<rect x="1316.9" y="783" width="24" height="4" fill="#2fb47c"/>
<rect x="1396" y="783" width="22.9" height="4" fill="#2fb47c"/>
<rect x="1463.9" y="783" width="186.1" height="4" fill="#2fb47c"/>
<rect x="341.1" y="767" width="28.9" height="4" fill="#1fa188"/>
<rect x="410" y="767" width="37.9" height="4" fill="#1fa188"/>
<rect x="469" y="767" width="22.9" height="4" fill="#1fa188"/>
<rect x="526.9" y="767" width="19.1" height="4" fill="#1fa188"/>
<rect x="562" y="767" width="28" height="4" fill="#1fa188"/>
<rect x="616" y="767" width="33" height="4" fill="#1fa188"/>
<rect x="959" y="767" width="29" height="4" fill="#1fa188"/>
<rect x="1061.9" y="767" width="24" height="4" fill="#1fa188"/>
<rect x="1101" y="767" width="24" height="4" fill="#1fa188"/>
<rect x="1160" y="767" width="33.9" height="4" fill="#1fa188"/>
<rect x="1247.8" y="767" width="24.2" height="4" fill="#1fa188"/>
<rect x="1425" y="767" width="87.1" height="4" fill="#1fa188"/>
<rect x="420" y="750" width="22.9" height="4" fill="#228c8d"/>
<rect x="531.9" y="750" width="24.2" height="4" fill="#228c8d"/>
<rect x="566.9" y="750" width="23.1" height="4" fill="#228c8d"/>
<rect x="621" y="750" width="120.8" height="4" fill="#228c8d"/>
<rect x="969" y="750" width="165.9" height="4" fill="#228c8d"/>
<rect x="1185.1" y="750" width="160.8" height="4" fill="#228c8d"/>
<rect x="1468.9" y="750" width="24" height="4" fill="#228c8d"/>
<rect x="429" y="734" width="24" height="4" fill="#2a788e"/>
<rect x="576" y="734" width="156.9" height="4" fill="#2a788e"/>
<rect x="992.9" y="734" width="112" height="4" fill="#2a788e"/>
<rect x="1115.9" y="734" width="107" height="4" fill="#2a788e"/>
<rect x="1262.9" y="734" width="29" height="4" fill="#2a788e"/>
<rect x="1489" y="734" width="23.1" height="4" fill="#2a788e"/>
<rect x="591.1" y="718" width="23.8" height="4" fill="#32648e"/>
<rect x="655.1" y="718" width="116.9" height="4" fill="#32648e"/>
<rect x="1072" y="718" width="171" height="4" fill="#32648e"/>
<rect x="1262.9" y="718" width="24" height="4" fill="#32648e"/>
<rect x="595.9" y="701" width="137" height="4" fill="#3d4d8a"/>
<rect x="1091" y="701" width="29" height="4" fill="#3d4d8a"/>
<rect x="1198.9" y="701" width="24" height="4" fill="#3d4d8a"/>
<rect x="1273" y="701" width="53" height="4" fill="#3d4d8a"/>
<rect x="1110.9" y="685" width="24" height="4" fill="#463480"/>
</g>
<g id="monthlines" stroke="#ffffff" stroke-opacity="0.38" stroke-width="2.08" stroke-dasharray="2.08 3.44" fill="none">
<path d="M74 842.5 V641.5"/>
<path d="M218 842.5 V641.5"/>
<path d="M365 842.5 V641.5"/>
<path d="M505 842.5 V641.5"/>
<path d="M650 842.5 V641.5"/>
<path d="M797 842.5 V641.5"/>
<path d="M940 842.5 V641.5"/>
<path d="M1091 842.5 V641.5"/>
<path d="M1239 842.5 V641.5"/>
<path d="M1394 842.5 V641.5"/>
<path d="M1548 842.5 V641.5"/>
<path d="M1687 842.5 V641.5"/>
</g>
<g id="peaks" stroke="#ffffff" stroke-width="2" fill="none">
<path d="M113 834 H121 M117 830 V838"/>
<path d="M241 834 H249 M245 830 V838"/>
<path d="M511 834 H519 M515 830 V838"/>
<path d="M707 834 H715 M711 830 V838"/>
<path d="M833 834 H841 M837 830 V838"/>
<path d="M962 834 H970 M966 830 V838"/>
<path d="M986 834 H994 M990 830 V838"/>
<path d="M1116 834 H1124 M1120 830 V838"/>
<path d="M1295 834 H1303 M1299 830 V838"/>
<path d="M1342 834 H1350 M1346 830 V838"/>
<path d="M1413 834 H1421 M1417 830 V838"/>
<path d="M1482 834 H1490 M1486 830 V838"/>
<path d="M1531 834 H1539 M1535 830 V838"/>
<path d="M1732 834 H1740 M1736 830 V838"/>
<path d="M1766 834 H1774 M1770 830 V838"/>
<path d="M172 818 H180 M176 814 V822"/>
<path d="M256 818 H264 M260 814 V822"/>
<path d="M323 818 H331 M327 814 V822"/>
<path d="M437 818 H445 M441 814 V822"/>
<path d="M599 818 H607 M603 814 V822"/>
<path d="M717 818 H725 M721 814 V822"/>
<path d="M793 818 H801 M797 814 V822"/>
<path d="M939 818 H947 M943 814 V822"/>
<path d="M1006 818 H1014 M1010 814 V822"/>
<path d="M1153 818 H1161 M1157 814 V822"/>
<path d="M1251 818 H1259 M1255 814 V822"/>
<path d="M1300 818 H1308 M1304 814 V822"/>
<path d="M1349 818 H1357 M1353 814 V822"/>
<path d="M1403 818 H1411 M1407 814 V822"/>
<path d="M1467 818 H1475 M1471 814 V822"/>
<path d="M1555 818 H1563 M1559 814 V822"/>
<path d="M174 802 H182 M178 798 V806"/>
<path d="M378 802 H386 M382 798 V806"/>
<path d="M545 802 H553 M549 798 V806"/>
<path d="M682 802 H690 M686 798 V806"/>
<path d="M741 802 H749 M745 798 V806"/>
<path d="M1075 802 H1083 M1079 798 V806"/>
<path d="M1217 802 H1225 M1221 798 V806"/>
<path d="M1305 802 H1313 M1309 798 V806"/>
<path d="M1467 802 H1475 M1471 798 V806"/>
<path d="M1560 802 H1568 M1564 798 V806"/>
<path d="M202 785 H210 M206 781 V789"/>
<path d="M400 785 H408 M404 781 V789"/>
<path d="M525 785 H533 M529 781 V789"/>
<path d="M639 785 H647 M643 781 V789"/>
<path d="M815 785 H823 M819 781 V789"/>
<path d="M959 785 H967 M963 781 V789"/>
<path d="M1040 785 H1048 M1044 781 V789"/>
<path d="M1188 785 H1196 M1192 781 V789"/>
<path d="M1251 785 H1259 M1255 781 V789"/>
<path d="M1325 785 H1333 M1329 781 V789"/>
<path d="M1403 785 H1411 M1407 781 V789"/>
<path d="M1546 785 H1554 M1550 781 V789"/>
<path d="M356 769 H364 M360 765 V773"/>
<path d="M426 769 H434 M430 765 V773"/>
<path d="M476 769 H484 M480 765 V773"/>
<path d="M535 769 H543 M539 765 V773"/>
<path d="M571 769 H579 M575 765 V773"/>
<path d="M631 769 H639 M635 765 V773"/>
<path d="M974 769 H982 M978 765 V773"/>
<path d="M1070 769 H1078 M1074 765 V773"/>
<path d="M1109 769 H1117 M1113 765 V773"/>
<path d="M1178 769 H1186 M1182 765 V773"/>
<path d="M1256 769 H1264 M1260 765 V773"/>
<path d="M1467 769 H1475 M1471 765 V773"/>
<path d="M427 752 H435 M431 748 V756"/>
<path d="M540 752 H548 M544 748 V756"/>
<path d="M574 752 H582 M578 748 V756"/>
<path d="M704 752 H712 M708 748 V756"/>
<path d="M1094 752 H1102 M1098 748 V756"/>
<path d="M1271 752 H1279 M1275 748 V756"/>
<path d="M1477 752 H1485 M1481 748 V756"/>
<path d="M437 736 H445 M441 732 V740"/>
<path d="M631 736 H639 M635 732 V740"/>
<path d="M1039 736 H1047 M1043 732 V740"/>
<path d="M1168 736 H1176 M1172 732 V740"/>
<path d="M1275 736 H1283 M1279 732 V740"/>
<path d="M1497 736 H1505 M1501 732 V740"/>
<path d="M599 720 H607 M603 716 V724"/>
<path d="M727 720 H735 M731 716 V724"/>
<path d="M1188 720 H1196 M1192 716 V724"/>
<path d="M1271 720 H1279 M1275 716 V724"/>
<path d="M687 703 H695 M691 699 V707"/>
<path d="M1102 703 H1110 M1106 699 V707"/>
<path d="M1207 703 H1215 M1211 699 V707"/>
<path d="M1300 703 H1308 M1304 699 V707"/>
<path d="M1119 687 H1127 M1123 683 V691"/>
</g>
<g id="barlabels" font-family="'DejaVu Sans','Liberation Sans',sans-serif" font-size="10.42" fill="#ffffff" text-anchor="middle">
<text x="117.55" y="831.5">KSE</text>
<text x="254.95" y="831.5">ETA</text>
<text x="494.4" y="831.5">NZC</text>
<text x="710.45" y="831.5">NDA</text>
<text x="852.95" y="831.5">SPE</text>
<text x="945.4" y="831.5">ARD</text>
<text x="1024.55" y="831.5">EGE</text>
<text x="1142.5" y="831.5">NTA</text>
<text x="1284.05" y="831.5">MON</text>
<text x="1343.5" y="831.5">URS</text>
<text x="1412.35" y="831.5">AHY</text>
<text x="1485.5" y="831.5">GUM</text>
<text x="1535" y="831.5">OHY</text>
<text x="1735.9" y="831.5">XHE</text>
<text x="1769.95" y="831.5">EVI</text>
<text x="175.65" y="815">AVB</text>
<text x="254.95" y="815">ELY</text>
<text x="323.85" y="815">CAM</text>
<text x="431.9" y="815">SSG</text>
<text x="578.45" y="815">PCA</text>
<text x="720.5" y="815">AUD</text>
<text x="808.3" y="815">AUR</text>
<text x="931.1" y="815">DSX</text>
<text x="1009.9" y="815">OCU</text>
<text x="1137.45" y="815">OER</text>
<text x="1255.45" y="815">DKD</text>
<text x="1304.45" y="815">DSV</text>
<text x="1353.45" y="815">ALY</text>
<text x="1407.4" y="815">JLE</text>
<text x="1471.9" y="815">SCC</text>
<text x="1559.35" y="815">FEV</text>
<text x="176.45" y="799">LYR</text>
<text x="372.75" y="799">JMC</text>
<text x="558.8" y="799">JPE</text>
<text x="671.25" y="799">PAU</text>
<text x="774.15" y="799">NIA</text>
<text x="1049.9" y="799">STA</text>
<text x="1205.3" y="799">NOO</text>
<text x="1353.65" y="799">COM</text>
<text x="1470.9" y="799">NCC</text>
<text x="1564" y="799">FED</text>
<text x="205.4" y="782.6">HVI</text>
<text x="412" y="782.6">ARI</text>
<text x="529.55" y="782.6">SZC</text>
<text x="617.7" y="782.6">CAP</text>
<text x="818.2" y="782.6">NUE</text>
<text x="961.35" y="782.6">OCT</text>
<text x="1059.3" y="782.6">ORI</text>
<text x="1186.45" y="782.6">AMO</text>
<text x="1255.45" y="782.6">DPC</text>
<text x="1328.9" y="782.6">XVI</text>
<text x="1407.45" y="782.6">QUA</text>
<text x="1559.55" y="782.6">AAN</text>
<text x="352.95" y="765.5">TAH</text>
<text x="431.55" y="765.5">JEA</text>
<text x="480.45" y="765.5">JIP</text>
<text x="538.55" y="765.5">PPS</text>
<text x="578.6" y="765.5">ZCS</text>
<text x="632.5" y="765.5">GDR</text>
<text x="970.4" y="765.5">DRA</text>
<text x="1073.4" y="765.5">LUM</text>
<text x="1113" y="765.5">RPU</text>
<text x="1176.35" y="765.5">THA</text>
<text x="1259.9" y="765.5">PSU</text>
<text x="1470.85" y="765.5">XCB</text>
<text x="431.45" y="749.3">JRC</text>
<text x="544" y="749.3">CAN</text>
<text x="577.65" y="749.3">FAN</text>
<text x="681.4" y="749.3">PER</text>
<text x="1049.1" y="749.3">CTA</text>
<text x="1264.6" y="749.3">HYD</text>
<text x="1481.5" y="749.3">XUM</text>
<text x="441" y="733">COR</text>
<text x="657.05" y="733">SDA</text>
<text x="1048.9" y="733">LMI</text>
<text x="1166.7" y="733">LEO</text>
<text x="1274.9" y="733">EHY</text>
<text x="1500.55" y="733">ECV</text>
<text x="603" y="717">JXA</text>
<text x="715.05" y="717">KCG</text>
<text x="1156.6" y="717">AND</text>
<text x="1274.9" y="717">DAD</text>
<text x="666.6" y="700.4">ERI</text>
<text x="1108.5" y="700.4">SLD</text>
<text x="1210.9" y="700.4">ORS</text>
<text x="1299.5" y="700.4">GEM</text>
<text x="1122.9" y="684.2">KUM</text>
</g>
<rect x="19.5" y="641.5" width="1766" height="201" fill="none" stroke="#ffffff" stroke-width="1.11"/>
<g id="xticks" stroke="#ffffff" stroke-width="1.11" font-family="'DejaVu Sans','Liberation Sans',sans-serif" font-size="13.89" fill="#ffffff" text-anchor="middle">
<path d="M19.5 842.5 v5.2"/>
<text x="19.5" y="862.4" stroke="none">0</text>
<path d="M264.5 842.5 v5.2"/>
<text x="264.78" y="862.4" stroke="none">50</text>
<path d="M510.5 842.5 v5.2"/>
<text x="510.06" y="862.4" stroke="none">100</text>
<path d="M755.5 842.5 v5.2"/>
<text x="755.33" y="862.4" stroke="none">150</text>
<path d="M1000.5 842.5 v5.2"/>
<text x="1000.61" y="862.4" stroke="none">200</text>
<path d="M1245.5 842.5 v5.2"/>
<text x="1245.89" y="862.4" stroke="none">250</text>
<path d="M1491.5 842.5 v5.2"/>
<text x="1491.17" y="862.4" stroke="none">300</text>
<path d="M1736.5 842.5 v5.2"/>
<text x="1736.44" y="862.4" stroke="none">350</text>
<text x="902.3" y="882.2" stroke="none">Solar longitude (deg)</text>
</g>
<g id="sky" clip-path="url(#skyclip)" fill="none">
<path d="M1068.95 428.87 L1075.3 425.14 L1081.61 421.35 L1087.88 417.51 L1094.1 413.61 L1100.26 409.67 L1106.35 405.69 L1112.37 401.66 L1118.32 397.6 L1124.17 393.5 L1129.94 389.38 L1135.61 385.22 L1141.17 381.04 L1146.63 376.83 L1151.96 372.59 L1157.18 368.34 L1162.27 364.07 L1167.23 359.78 L1172.06 355.48 L1176.74 351.17 L1181.28 346.84 L1185.68 342.5 L1189.92 338.16 L1194 333.81 L1197.93 329.45 L1201.7 325.1 L1205.3 320.74 L1208.74 316.37 L1212.02 312.02 L1215.12 307.66 L1218.05 303.31 L1220.82 298.96 L1223.41 294.62 L1225.84 290.3 L1228.09 285.98 L1230.17 281.67 L1232.09 277.38 L1233.83 273.11 L1235.42 268.85 L1236.84 264.62 L1238.1 260.4 L1239.21 256.21 L1240.16 252.05 L1240.97 247.92 L1241.64 243.81 L1242.17 239.75 L1242.57 235.71 L1242.85 231.72 L1243.02 227.77 L1243.08 223.87 L1243.05 220.01 L1242.93 216.21 L1242.73 212.47 L1242.48 208.79 L1242.17 205.17 L1241.83 201.62 L1241.48 198.15 L1241.12 194.76 L1240.77 191.45 L1240.46 188.24 L1240.2 185.12 L1240.01 182.11 L1239.93 179.2 L1239.96 176.42 L1240.14 173.76 L1240.49 171.23 L1241.05 168.83 L1241.83 166.59 L1242.86 164.5 L1244.18 162.57 L1245.82 160.81 L1247.79 159.22 L1250.14 157.81 L1252.88 156.6 L1256.05 155.57 L1259.67 154.75 L1263.75 154.13 L1268.32 153.71" stroke="#c0c0c0" stroke-opacity="0.27" stroke-width="1.39" stroke-dasharray="1.39 2.29"/>
<path d="M538.3 153.5 L543.9 153.49 L549 153.7" stroke="#c0c0c0" stroke-opacity="0.27" stroke-width="1.39" stroke-dasharray="1.39 2.29"/>
<path d="M1013.69 433.3 L1016.13 427.71 L1018.47 422.12 L1020.71 416.52 L1022.84 410.93 L1024.86 405.34 L1026.78 399.75 L1028.58 394.15 L1030.27 388.56 L1031.84 382.97 L1033.3 377.38 L1034.64 371.78 L1035.86 366.19 L1036.96 360.6 L1037.94 355 L1038.81 349.41 L1039.54 343.82 L1040.16 338.23 L1040.65 332.63 L1041.02 327.04 L1041.26 321.45 L1041.38 315.85 L1041.37 310.26 L1041.24 304.67 L1040.99 299.08 L1040.61 293.48 L1040.1 287.89 L1039.47 282.3 L1038.73 276.7 L1037.85 271.11 L1036.86 265.52 L1035.74 259.93 L1034.51 254.33 L1033.16 248.74 L1031.69 243.15 L1030.1 237.56 L1028.4 231.96 L1026.59 226.37 L1024.67 220.78 L1022.63 215.19 L1020.49 209.59 L1018.24 204 L1015.89 198.41 L1013.44 192.82 L1010.89 187.23 L1008.24 181.64 L1005.5 176.05 L1002.66 170.46 L999.73 164.87 L996.72 159.27 L993.62 153.69 L990.45 148.1 L987.19 142.51 L983.86 136.92 L980.45 131.33 L976.98 125.74 L973.44 120.16 L969.83 114.57 L966.17 108.99 L962.45 103.41 L958.68 97.83 L954.86 92.25 L951 86.67 L947.1 81.1 L943.16 75.54 L939.19 69.98 L935.2 64.43 L931.19 58.9 L927.18 53.4 L923.2 47.94 L919.29 42.58 L915.66 37.48 L913.24 33.28" stroke="#c0c0c0" stroke-opacity="0.27" stroke-width="1.39" stroke-dasharray="1.39 2.29"/>
<path d="M874.7 36.36 L862.95 41.36 L850.32 46.67 L837.41 52.11 L824.41 57.61 L811.41 63.14 L798.43 68.68 L785.53 74.24 L772.7 79.8" stroke="#c0c0c0" stroke-opacity="0.27" stroke-width="1.39" stroke-dasharray="1.39 2.29"/>
<path d="M828.44 421.97 L829.28 416.76 L830.18 411.54 L831.13 406.31 L832.13 401.07 L833.19 395.82 L834.3 390.56 L835.47 385.29 L836.68 380.02 L837.95 374.74 L839.27 369.45 L840.65 364.16 L842.07 358.87 L843.53 353.57 L845.05 348.27 L846.61 342.96 L848.22 337.66 L849.87 332.35 L851.57 327.04 L853.3 321.73 L855.07 316.42 L856.89 311.12 L858.74 305.81 L860.62 300.5 L862.54 295.2 L864.49 289.89 L866.47 284.59 L868.49 279.3 L870.52 274.01 L872.59 268.72 L874.67 263.43 L876.78 258.16 L878.91 252.89 L881.06 247.62 L883.22 242.37 L885.4 237.12 L887.59 231.89 L889.8 226.66 L892.01 221.45 L894.23 216.24 L896.46 211.06 L898.69 205.89 L900.92 200.73 L903.16 195.6 L905.39 190.49 L907.62 185.4 L909.85 180.34 L912.08 175.31 L914.3 170.3 L916.51 165.34 L918.72 160.41 L920.92 155.53 L923.11 150.71 L925.3 145.93 L927.49 141.22 L929.67 136.59 L931.85 132.03 L934.04 127.57 L936.25 123.22 L938.47 118.98 L940.73 114.89 L943.03 110.96 L945.4 107.21 L947.86 103.67 L950.44 100.37 L953.18 97.35 L956.12 94.64 L959.31 92.28 L962.83 90.32 L966.74 88.78 L971.1 87.7" stroke="#c0c0c0" stroke-opacity="0.27" stroke-width="1.39" stroke-dasharray="1.39 2.29"/>
<path d="M621.62 327.7 L621.57 322.11 L621.78 316.52 L622.24 310.92 L622.94 305.33 L623.9 299.74 L625.11 294.14 L626.57 288.55 L628.28 282.96 L630.23 277.37 L632.43 271.77 L634.87 266.18 L637.54 260.59 L640.46 255 L643.61 249.4 L647 243.81 L650.61 238.22 L654.45 232.63 L658.51 227.04 L662.79 221.44 L667.29 215.85 L671.99 210.26 L676.91 204.67 L682.02 199.08 L687.34 193.48 L692.84 187.89 L698.53 182.3 L704.41 176.71 L710.46 171.12 L716.69 165.53 L723.08 159.94 L729.63 154.35 L736.34 148.76 L743.2 143.17 L750.19 137.59 L757.33 132 L764.59 126.41 L771.97 120.83 L779.47 115.24 L787.08 109.66 L794.79 104.08 L802.59 98.5 L810.48 92.92 L818.44 87.35 L826.48 81.78 L834.58 76.21 L842.72 70.66 L850.91 65.11 L859.11 59.58 L867.32 54.08 L875.5 48.63 L883.58 43.27 L891.41 38.14 L898.53 33.81" stroke="#c0c0c0" stroke-opacity="0.27" stroke-width="1.39" stroke-dasharray="1.39 2.29"/>
<path d="M911.28 35.93 L919.51 40.81 L928.2 46.09 L937.06 51.51 L945.97 56.99 L954.9 62.51 L963.82 68.05 L972.7 73.6 L981.53 79.16 L990.3 84.73 L999 90.3" stroke="#c0c0c0" stroke-opacity="0.27" stroke-width="1.39" stroke-dasharray="1.39 2.29"/>
<path d="M826.04 437.65 L827.29 432.72 L828.57 427.77 L829.9 422.8 L831.28 417.81 L832.71 412.79 L834.18 407.76 L835.71 402.71 L837.27 397.65 L838.88 392.58 L840.54 387.49 L842.25 382.39 L843.99 377.28 L845.78 372.17 L847.62 367.04 L849.49 361.91 L851.4 356.77 L853.35 351.63 L855.34 346.49 L857.36 341.34 L859.42 336.18 L861.51 331.03 L863.64 325.87 L865.79 320.71 L867.97 315.55 L870.17 310.4 L872.4 305.24 L874.66 300.09 L876.93 294.94 L879.23 289.79 L881.54 284.65 L883.87 279.51 L886.21 274.38 L888.56 269.25 L890.93 264.13 L893.3 259.02 L895.68 253.92 L898.06 248.84 L900.45 243.76 L902.84 238.69 L905.23 233.64 L907.62 228.61 L910 223.59 L912.38 218.6 L914.75 213.62 L917.12 208.66 L919.47 203.74 L921.82 198.83 L924.15 193.96 L926.47 189.13 L928.79 184.33 L931.08 179.56 L933.37 174.85 L935.65 170.18 L937.91 165.57 L940.17 161.02 L942.42 156.53 L944.67 152.12 L946.91 147.79 L949.16 143.56 L951.43 139.42 L953.71 135.4 L956.03 131.51 L958.39 127.76 L960.81 124.17 L963.3 120.76 L965.89 117.55 L968.61 114.56 L971.48 111.81 L974.55 109.33 L977.84 107.14 L981.4 105.27 L985.29 103.74 L989.53 102.58 L994.19 101.79 L999.3 101.4" stroke="#c0c0c0" stroke-opacity="0.27" stroke-width="1.39" stroke-dasharray="1.39 2.29"/>
<path d="M539.36 313.75 L540.45 308.18 L541.86 302.61 L543.6 297.05 L545.65 291.48 L548.02 285.91 L550.7 280.34 L553.7 274.78 L557.01 269.21 L560.62 263.64 L564.54 258.08 L568.76 252.52 L573.27 246.95 L578.08 241.39 L583.17 235.83 L588.55 230.27 L594.2 224.71 L600.12 219.15 L606.32 213.59 L612.77 208.03 L619.48 202.48 L626.43 196.93 L633.63 191.37 L641.06 185.83 L648.72 180.28 L656.61 174.74 L664.7 169.2 L673 163.66 L681.49 158.13 L690.17 152.6 L699.03 147.08 L708.06 141.56 L717.25 136.05 L726.59 130.55 L736.06 125.06 L745.67 119.58 L755.38 114.11 L765.2 108.66 L775.1 103.23 L785.08 97.82 L795.1 92.44 L805.15 87.1 L815.21 81.8 L825.24 76.58 L835.19 71.44 L845.01 66.42 L854.62 61.57 L863.91 56.99 L872.72 52.8 L880.83 49.24 L888.02 46.65 L894.22 45.44 L899.69 45.89 L904.91 47.88 L910.24 51.03 L915.79 54.96 L921.57 59.38 L927.52 64.11 L933.59 69.06 L939.74 74.15 L945.95 79.34 L952.17 84.6 L958.41 89.92 L964.63 95.28 L970.83 100.68 L977 106.1" stroke="#c0c0c0" stroke-opacity="0.27" stroke-width="1.39" stroke-dasharray="1.39 2.29"/>
<path d="M724.48 424.02 L721.4 418.43 L718.49 412.84 L715.74 407.24 L713.16 401.65 L710.76 396.06 L708.52 390.46 L706.46 384.87 L704.57 379.28 L702.86 373.68 L701.33 368.09 L699.98 362.5 L698.81 356.9 L697.83 351.31 L697.02 345.72 L696.41 340.12 L695.98 334.53 L695.73 328.94 L695.67 323.34 L695.79 317.75 L696.1 312.16 L696.6 306.56 L697.28 300.97 L698.14 295.37 L699.19 289.78 L700.42 284.19 L701.83 278.59 L703.43 273 L705.2 267.41 L707.14 261.81 L709.27 256.22 L711.56 250.63 L714.03 245.03 L716.67 239.44 L719.47 233.85 L722.44 228.26 L725.57 222.66 L728.86 217.07 L732.3 211.48 L735.9 205.88 L739.65 200.29 L743.54 194.7 L747.57 189.11 L751.75 183.51 L756.06 177.92 L760.5 172.33 L765.06 166.74 L769.75 161.15 L774.56 155.56 L779.49 149.96 L784.52 144.37 L789.66 138.78 L794.9 133.19 L800.24 127.6 L805.67 122.02 L811.18 116.43 L816.77 110.84 L822.44 105.25 L828.18 99.67 L833.99 94.09 L839.85 88.5 L845.77 82.93 L851.74 77.35 L857.74 71.78 L863.78 66.22 L869.84 60.67 L875.92 55.13 L881.99 49.62 L888.03 44.17 L893.97 38.86 L899.61 34" stroke="#c0c0c0" stroke-opacity="0.27" stroke-width="1.39" stroke-dasharray="1.39 2.29"/>
<path d="M912.66 34.39 L922.9 39.32 L933.78 44.65 L944.85 50.11 L955.98 55.62 L967.11 61.16 L978.21 66.71 L989.27 72.28 L1000.26 77.85 L1011.18 83.42 L1022 89" stroke="#c0c0c0" stroke-opacity="0.27" stroke-width="1.39" stroke-dasharray="1.39 2.29"/>
<path d="M722.33 431.86 L719.41 426.3 L716.65 420.74 L714.05 415.18 L711.62 409.62 L709.36 404.06 L707.27 398.49 L705.35 392.93 L703.6 387.36 L702.04 381.8 L700.65 376.23 L699.44 370.66 L698.41 365.1 L697.56 359.53 L696.9 353.96 L696.41 348.39 L696.11 342.82 L696 337.25 L696.07 331.68 L696.32 326.11 L696.75 320.54 L697.37 314.98 L698.17 309.41 L699.16 303.84 L700.32 298.27 L701.66 292.7 L703.19 287.13 L704.89 281.56 L706.76 275.99 L708.81 270.43 L711.03 264.86 L713.42 259.29 L715.98 253.73 L718.71 248.16 L721.59 242.6 L724.64 237.03 L727.85 231.47 L731.21 225.91 L734.72 220.34 L738.38 214.79 L742.19 209.23 L746.13 203.67 L750.21 198.11 L754.43 192.56 L758.78 187.01 L763.25 181.46 L767.84 175.92 L772.55 170.37 L777.38 164.83 L782.31 159.3 L787.34 153.76 L792.47 148.24 L797.69 142.71 L803 137.2 L808.38 131.69 L813.85 126.19 L819.38 120.7 L824.97 115.23 L830.62 109.76 L836.32 104.32 L842.05 98.9 L847.82 93.5 L853.6 88.14 L859.39 82.82 L865.16 77.56 L870.92 72.38 L876.62 67.31 L882.24 62.39 L887.75 57.7 L893.1 53.36 L898.27 49.59 L903.29 46.69 L908.39 45.11 L914.05 45.19 L920.73 46.9 L928.54 49.89 L937.29 53.73 L946.71 58.1 L956.58 62.81 L966.74 67.75 L977.09 72.83 L987.55 78.02 L998.06 83.29 L1008.6 88.61 L1019.11 93.98 L1029.59 99.37 L1040 104.8" stroke="#c0c0c0" stroke-opacity="0.27" stroke-width="1.39" stroke-dasharray="1.39 2.29"/>
<path d="M629.64 407.65 L624.93 402.1 L620.47 396.55 L616.26 391 L612.31 385.45 L608.6 379.9 L605.16 374.35 L601.98 368.79 L599.07 363.24 L596.42 357.68 L594.05 352.12 L591.95 346.57 L590.12 341.01 L588.57 335.45 L587.3 329.9 L586.31 324.34 L585.6 318.78 L585.16 313.22 L585.01 307.67 L585.15 302.11 L585.56 296.55 L586.25 291 L587.22 285.44 L588.48 279.89 L590.01 274.33 L591.81 268.78 L593.89 263.22 L596.25 257.67 L598.87 252.12 L601.76 246.56 L604.92 241.01 L608.34 235.47 L612.02 229.92 L615.95 224.37 L620.14 218.83 L624.57 213.28 L629.24 207.74 L634.16 202.21 L639.3 196.67 L644.68 191.14 L650.27 185.61 L656.09 180.08 L662.11 174.56 L668.34 169.04 L674.77 163.53 L681.39 158.02 L688.19 152.52 L695.17 147.03 L702.31 141.54 L709.61 136.07 L717.06 130.6 L724.65 125.15 L732.36 119.72 L740.18 114.3 L748.11 108.9 L756.11 103.54 L764.18 98.2 L772.28 92.91 L780.38 87.66 L788.46 82.49 L796.45 77.4 L804.27 72.42 L811.83 67.61 L818.95 63.01 L825.39 58.74 L830.73 54.93 L834.34 51.81 L835.31 49.65" stroke="#c0c0c0" stroke-opacity="0.27" stroke-width="1.39" stroke-dasharray="1.39 2.29"/>
<path d="M968.56 48.75 L964.46 49.26 L964.04 51.1 L966.31 53.98 L970.34 57.63 L975.49 61.79 L981.34 66.31 L987.63 71.07 L994.19 76 L1000.91 81.06 L1007.73 86.22 L1014.59 91.45 L1021.45 96.73 L1028.29 102.05 L1035.08 107.41 L1041.8 112.8" stroke="#c0c0c0" stroke-opacity="0.27" stroke-width="1.39" stroke-dasharray="1.39 2.29"/>
<path d="M559.62 385.86 L555.66 380.28 L552.02 374.69 L548.68 369.11 L545.66 363.52 L542.96 357.94 L540.59 352.35 L538.53 346.77 L536.81 341.18 L535.4 335.6 L534.33 330.01 L533.59 324.43 L533.18 318.84 L533.1 313.26 L533.34 307.67 L533.92 302.09 L534.83 296.5 L536.07 290.92 L537.64 285.33 L539.53 279.75 L541.75 274.16 L544.29 268.58 L547.15 263 L550.32 257.41 L553.82 251.83 L557.62 246.24 L561.73 240.66 L566.15 235.08 L570.87 229.5 L575.88 223.91 L581.19 218.33 L586.78 212.75 L592.65 207.17 L598.8 201.59 L605.22 196.01 L611.91 190.43 L618.85 184.85 L626.04 179.28 L633.48 173.7 L641.16 168.13 L649.07 162.55 L657.2 156.98 L665.55 151.41 L674.11 145.84 L682.86 140.28 L691.81 134.72 L700.94 129.16 L710.24 123.6 L719.7 118.05 L729.31 112.5 L739.07 106.96 L748.95 101.43 L758.95 95.9 L769.05 90.39 L779.24 84.9 L789.49 79.42 L799.78 73.97 L810.08 68.56 L820.33 63.2 L830.46 57.93 L840.34 52.79 L849.69 47.89 L857.93 43.44 L863.65 39.91" stroke="#c0c0c0" stroke-opacity="0.27" stroke-width="1.39" stroke-dasharray="1.39 2.29"/>
<path d="M933.85 38.21 L930.68 39.15 L932.62 42.24 L936.87 46.49 L942.09 51.28 L947.75 56.36 L953.62 61.6 L959.59 66.94 L965.6 72.33 L971.61 77.77 L977.61 83.24 L983.57 88.73 L989.48 94.24 L995.33 99.76 L1001.11 105.29 L1006.81 110.83 L1012.43 116.37 L1017.96 121.92 L1023.39 127.48 L1028.72 133.04 L1033.94 138.6 L1039.05 144.16 L1044.04 149.73 L1048.9 155.3" stroke="#c0c0c0" stroke-opacity="0.27" stroke-width="1.39" stroke-dasharray="1.39 2.29"/>
<path d="M648.89 423.21 L642.37 418.14 L636.03 413.05 L629.87 407.95 L623.91 402.83 L618.14 397.7 L612.59 392.55 L607.25 387.4 L602.13 382.24 L597.23 377.06 L592.57 371.88 L588.14 366.7 L583.95 361.51 L580 356.31 L576.31 351.11 L572.86 345.9 L569.68 340.69 L566.75 335.48 L564.08 330.27 L561.68 325.06 L559.54 319.84 L557.67 314.63 L556.06 309.41 L554.73 304.2 L553.67 298.99 L552.88 293.78 L552.36 288.58 L552.12 283.38 L552.14 278.18 L552.43 272.99 L552.99 267.81 L553.81 262.63 L554.9 257.46 L556.24 252.3 L557.85 247.14 L559.71 242 L561.81 236.87 L564.17 231.76 L566.76 226.65 L569.59 221.57 L572.64 216.5 L575.92 211.45 L579.41 206.42 L583.11 201.41 L587 196.43 L591.08 191.48 L595.34 186.56 L599.76 181.67 L604.33 176.81 L609.04 172 L613.86 167.24 L618.79 162.53 L623.8 157.87 L628.87 153.27 L633.98 148.75 L639.09 144.3 L644.18 139.95 L649.2 135.69 L654.13 131.54 L658.91 127.51 L663.49 123.63 L667.81 119.91 L671.81 116.36 L675.42 113.02 L678.53 109.9 L681.07 107.03 L682.93 104.44 L684 102.16 L684.17 100.22 L683.33 98.64" stroke="#c0c0c0" stroke-opacity="0.27" stroke-width="1.39" stroke-dasharray="1.39 2.29"/>
<path d="M1113.29 97.45 L1105.56 96.68 L1099.01 96.32 L1093.61 96.4 L1089.34 96.9 L1086.14 97.83 L1083.93 99.15 L1082.62 100.86 L1082.11 102.93 L1082.31 105.32 L1083.12 108.01 L1084.45 110.97 L1086.23 114.17 L1088.36 117.59 L1090.8 121.2" stroke="#c0c0c0" stroke-opacity="0.27" stroke-width="1.39" stroke-dasharray="1.39 2.29"/>
<path d="M1299.57 335.6 L1301.36 330.09 L1302.79 324.59 L1303.87 319.08 L1304.61 313.57 L1305 308.07 L1305.03 302.56 L1304.72 297.05 L1304.06 291.55 L1303.04 286.04 L1301.68 280.54 L1299.98 275.04 L1297.93 269.54 L1295.53 264.04 L1292.8 258.54 L1289.73 253.04 L1286.33 247.55 L1282.6 242.06 L1278.54 236.57 L1274.16 231.09 L1269.46 225.61 L1264.45 220.13 L1259.13 214.65 L1253.51 209.19 L1247.6 203.72 L1241.4 198.26 L1234.92 192.81 L1228.17 187.37 L1221.15 181.93 L1213.88 176.5 L1206.36 171.09 L1198.6 165.68 L1190.62 160.29 L1182.42 154.91 L1174.02 149.54 L1165.43 144.2 L1156.67 138.87 L1147.75 133.57 L1138.69 128.3 L1129.51 123.06 L1120.24 117.86 L1110.9 112.7" stroke="#c0c0c0" stroke-opacity="0.27" stroke-width="1.39" stroke-dasharray="1.39 2.29"/>
<path d="M873.11 397.84 L872.29 392.26 L871.49 386.68 L870.72 381.1 L869.99 375.52 L869.28 369.95 L868.6 364.37 L867.95 358.79 L867.33 353.21 L866.74 347.63 L866.18 342.05 L865.66 336.47 L865.17 330.89 L864.71 325.31 L864.29 319.73 L863.9 314.15 L863.55 308.57 L863.23 302.99 L862.94 297.41 L862.7 291.83 L862.48 286.25 L862.3 280.67 L862.16 275.09 L862.06 269.51 L861.99 263.93 L861.95 258.35 L861.95 252.78 L861.99 247.2 L862.07 241.62 L862.18 236.04 L862.33 230.47 L862.51 224.89 L862.73 219.32 L862.98 213.74 L863.27 208.17 L863.59 202.6 L863.95 197.03 L864.34 191.46 L864.77 185.89 L865.23 180.32 L865.72 174.75 L866.24 169.19 L866.8 163.63 L867.38 158.07 L868 152.51 L868.65 146.95 L869.33 141.4 L870.03 135.85 L870.76 130.31 L871.52 124.77 L872.31 119.24 L873.12 113.72 L873.95 108.2 L874.8 102.7 L875.67 97.21 L876.56 91.73 L877.47 86.28 L878.38 80.86 L879.29 75.47 L880.21 70.14 L881.1 64.88 L881.94 59.73 L882.69 54.75 L883.26 50.06 L883.41 45.86 L882.62 42.56 L879.79 40.84 L873.38 41.26 L862.97 43.68 L849.54 47.38 L834.3 51.81 L818.02 56.63 L801.14 61.68 L783.92 66.88 L766.52 72.17 L749.04 77.52 L731.55 82.92 L714.11 88.36" stroke="#c0c0c0" stroke-opacity="0.27" stroke-width="1.39" stroke-dasharray="1.39 2.29"/>
<path d="M1107.37 93.82 L1122.2 99.3" stroke="#c0c0c0" stroke-opacity="0.27" stroke-width="1.39" stroke-dasharray="1.39 2.29"/>
<path d="M786.85 429.02 L782.74 423.8 L778.73 418.56 L774.81 413.31 L770.98 408.05 L767.26 402.78 L763.64 397.5 L760.13 392.21 L756.73 386.92 L753.45 381.62 L750.28 376.31 L747.24 371 L744.32 365.68 L741.53 360.36 L738.87 355.04 L736.35 349.71 L733.96 344.38 L731.7 339.05 L729.59 333.71 L727.61 328.38 L725.78 323.04 L724.09 317.71 L722.55 312.37 L721.15 307.04 L719.91 301.71 L718.81 296.38 L717.86 291.05 L717.06 285.72 L716.41 280.39 L715.92 275.07 L715.57 269.76 L715.37 264.44 L715.32 259.14 L715.43 253.84 L715.68 248.54 L716.07 243.25 L716.62 237.97 L717.3 232.7 L718.13 227.44 L719.1 222.19 L720.21 216.95 L721.45 211.73 L722.83 206.52 L724.34 201.32 L725.97 196.14 L727.72 190.98 L729.58 185.85 L731.56 180.73 L733.65 175.64 L735.83 170.59 L738.1 165.56 L740.46 160.57 L742.89 155.62 L745.39 150.72 L747.93 145.87 L750.52 141.08 L753.12 136.35 L755.73 131.7 L758.32 127.13 L760.87 122.67 L763.34 118.31 L765.71 114.09 L767.92 110.01 L769.93 106.11 L771.69 102.41 L773.11 98.94 L774.11 95.74 L774.61 92.84 L774.48 90.29 L773.62 88.13 L771.88 86.41 L769.15 85.16 L765.3 84.41 L760.24 84.18 L753.9 84.48 L746.27 85.31 L737.34 86.63 L727.17 88.43 L715.84 90.64 L703.47 93.25" stroke="#c0c0c0" stroke-opacity="0.27" stroke-width="1.39" stroke-dasharray="1.39 2.29"/>
<path d="M1114.72 96.19 L1119.52 99.44 L1125 102.94 L1131.03 106.68 L1137.48 110.6 L1144.27 114.7 L1151.32 118.95 L1158.55 123.32 L1165.9 127.8" stroke="#c0c0c0" stroke-opacity="0.27" stroke-width="1.39" stroke-dasharray="1.39 2.29"/>
<path d="M733.04 441.53 L728.53 435.99 L724.16 430.45 L719.96 424.9 L715.91 419.35 L712.03 413.8 L708.32 408.25 L704.77 402.69 L701.41 397.14 L698.21 391.58 L695.2 386.03 L692.38 380.47 L689.74 374.91 L687.28 369.35 L685.02 363.79 L682.95 358.23 L681.08 352.67 L679.4 347.11 L677.92 341.55 L676.63 335.99 L675.55 330.43 L674.67 324.87 L674 319.31 L673.52 313.75 L673.25 308.18 L673.18 302.62 L673.32 297.06 L673.66 291.5 L674.2 285.94 L674.94 280.38 L675.89 274.82 L677.03 269.26 L678.38 263.7 L679.92 258.15 L681.66 252.59 L683.6 247.03 L685.73 241.48 L688.05 235.92 L690.56 230.37 L693.26 224.82 L696.14 219.27 L699.2 213.72 L702.44 208.17 L705.86 202.63 L709.45 197.09 L713.2 191.55 L717.12 186.01 L721.2 180.48 L725.44 174.95 L729.82 169.42 L734.36 163.9 L739.03 158.38 L743.85 152.87 L748.79 147.36 L753.86 141.87 L759.05 136.38 L764.35 130.9 L769.76 125.43 L775.26 119.98 L780.85 114.54 L786.52 109.12 L792.25 103.73 L798.04 98.36 L803.86 93.03 L809.7 87.75 L815.52 82.53 L821.29 77.38 L826.96 72.34 L832.45 67.44 L837.64 62.73 L842.34 58.33 L846.25 54.35 L848.83 51.03 L849.29 48.66 L846.59 47.57 L839.85 47.97" stroke="#c0c0c0" stroke-opacity="0.27" stroke-width="1.39" stroke-dasharray="1.39 2.29"/>
<path d="M971.38 49.78 L975.11 52.7 L981.02 56.41 L988.3 60.63 L996.41 65.21 L1005.05 70.03 L1014 75.01 L1023.15 80.11 L1032.4 85.31 L1041.69 90.56 L1050.98 95.87 L1060.24 101.22 L1069.42 106.6 L1078.52 112.01 L1087.51 117.44 L1096.38 122.89 L1105.11 128.35 L1113.69 133.82 L1122.1 139.3 L1130.34 144.8 L1138.4 150.3" stroke="#c0c0c0" stroke-opacity="0.27" stroke-width="1.39" stroke-dasharray="1.39 2.29"/>
<path d="M659.44 440.03 L653.74 434.45 L648.26 428.87 L643 423.28 L637.98 417.7 L633.19 412.12 L628.65 406.53 L624.35 400.95 L620.3 395.36 L616.5 389.78 L612.95 384.19 L609.67 378.61 L606.65 373.02 L603.89 367.44 L601.4 361.85 L599.18 356.26 L597.23 350.68 L595.55 345.09 L594.15 339.5 L593.03 333.92 L592.18 328.33 L591.61 322.74 L591.32 317.16 L591.3 311.57 L591.57 305.99 L592.11 300.4 L592.93 294.81 L594.03 289.23 L595.41 283.64 L597.06 278.05 L598.98 272.47 L601.18 266.88 L603.64 261.3 L606.37 255.71 L609.37 250.13 L612.63 244.54 L616.15 238.96 L619.92 233.37 L623.95 227.79 L628.22 222.2 L632.75 216.62 L637.51 211.04 L642.51 205.45 L647.74 199.87 L653.19 194.29 L658.87 188.71 L664.77 183.13 L670.88 177.55 L677.19 171.97 L683.7 166.4 L690.41 160.82 L697.3 155.25 L704.38 149.67 L711.63 144.1 L719.04 138.53 L726.62 132.97 L734.35 127.4 L742.22 121.84 L750.23 116.28 L758.36 110.73 L766.62 105.19 L774.98 99.65 L783.44 94.12 L791.98 88.6 L800.6 83.09 L809.27 77.61 L817.97 72.15 L826.68 66.72 L835.35 61.35 L843.91 56.07 L852.23 50.93 L860.05 46.04 L866.74 41.67 L870.64 38.42" stroke="#c0c0c0" stroke-opacity="0.27" stroke-width="1.39" stroke-dasharray="1.39 2.29"/>
<path d="M933.19 37.41 L932.75 39.22 L937.07 42.9 L943.34 47.47 L950.41 52.46 L957.84 57.65 L965.44 62.96 L973.13 68.35 L980.83 73.79 L988.52 79.26 L996.17 84.75 L1003.77 90.26 L1011.3 95.78 L1018.76 101.31 L1026.12 106.86 L1033.38 112.4 L1040.53 117.96 L1047.57 123.52 L1054.49 129.08 L1061.27 134.64 L1067.92 140.21 L1074.42 145.78 L1080.77 151.35 L1086.97 156.93 L1093 162.5" stroke="#c0c0c0" stroke-opacity="0.27" stroke-width="1.39" stroke-dasharray="1.39 2.29"/>
<path d="M509.51 297.22 L513.08 292.02 L516.96 286.83 L521.13 281.63 L525.6 276.45 L530.35 271.26 L535.38 266.09 L540.7 260.92 L546.28 255.76 L552.13 250.61 L558.24 245.47 L564.6 240.34 L571.2 235.23 L578.04 230.12 L585.11 225.04 L592.39 219.96 L599.89 214.91 L607.59 209.88 L615.48 204.87 L623.55 199.88 L631.78 194.92 L640.17 189.99 L648.71 185.09 L657.38 180.22 L666.16 175.4 L675.05 170.61 L684.03 165.88 L693.07 161.2 L702.17 156.58 L711.31 152.02 L720.46 147.54 L729.61 143.14 L738.73 138.84 L747.81 134.63 L756.81 130.54 L765.72 126.59 L774.5 122.78 L783.14 119.14 L791.59 115.68 L799.84 112.43 L807.86 109.42 L815.62 106.66 L823.1 104.2 L830.29 102.05 L837.17 100.25 L843.74 98.82 L850.01 97.78 L855.99 97.16 L861.7 96.95 L867.18 97.17 L872.45 97.82 L877.56 98.87 L882.54 100.32 L887.43 102.14 L892.25 104.3 L897.03 106.78 L901.8 109.54 L906.56 112.57 L911.33 115.83 L916.12 119.29 L920.93 122.94 L925.76 126.76 L930.61 130.72 L935.48 134.81 L940.36 139.02 L945.25 143.33 L950.15 147.74 L955.05 152.22 L959.95 156.78 L964.83 161.4 L969.7 166.09 L974.55 170.82 L979.37 175.61 L984.15 180.43 L988.9 185.3" stroke="#c0c0c0" stroke-opacity="0.27" stroke-width="1.39" stroke-dasharray="1.39 2.29"/>
<path d="M549 153.7 L562 155.7" stroke="#7c7c7c" stroke-width="1.25"/>
<circle cx="562" cy="155.7" r="1.0" fill="#858585" stroke="none"/>
<path d="M772.7 79.8 L751.3 89.2" stroke="#7c7c7c" stroke-width="1.25"/>
<circle cx="751.3" cy="89.2" r="1.0" fill="#858585" stroke="none"/>
<path d="M971.1 87.7 L992.9 88.1" stroke="#7c7c7c" stroke-width="1.25"/>
<circle cx="992.9" cy="88.1" r="1.0" fill="#858585" stroke="none"/>
<path d="M999 90.3 L1015 100.7" stroke="#7c7c7c" stroke-width="1.25"/>
<circle cx="1015" cy="100.7" r="1.0" fill="#858585" stroke="none"/>
<path d="M999.3 101.4 L1012 101.9" stroke="#7c7c7c" stroke-width="1.25"/>
<circle cx="1012" cy="101.9" r="1.0" fill="#858585" stroke="none"/>
<path d="M977 106.1 L1004.6 131.2" stroke="#7c7c7c" stroke-width="1.25"/>
<circle cx="1004.6" cy="131.2" r="1.0" fill="#858585" stroke="none"/>
<path d="M1022 89 L1036 96.3" stroke="#7c7c7c" stroke-width="1.25"/>
<circle cx="1036" cy="96.3" r="1.0" fill="#858585" stroke="none"/>
<path d="M1040 104.8 L1047.6 108.8" stroke="#7c7c7c" stroke-width="1.25"/>
<circle cx="1047.6" cy="108.8" r="1.0" fill="#858585" stroke="none"/>
<path d="M1041.8 112.8 L1054.7 123.4" stroke="#7c7c7c" stroke-width="1.25"/>
<circle cx="1054.7" cy="123.4" r="1.0" fill="#858585" stroke="none"/>
<path d="M1048.9 155.3 L1056.4 164.2" stroke="#7c7c7c" stroke-width="1.25"/>
<circle cx="1056.4" cy="164.2" r="1.0" fill="#858585" stroke="none"/>
<path d="M1090.8 121.2 L1099.5 133.2" stroke="#7c7c7c" stroke-width="1.25"/>
<circle cx="1099.5" cy="133.2" r="1.0" fill="#858585" stroke="none"/>
<path d="M1110.9 112.7 L1088.6 100.4" stroke="#7c7c7c" stroke-width="1.25"/>
<circle cx="1088.6" cy="100.4" r="1.0" fill="#858585" stroke="none"/>
<path d="M1122.2 99.3 L1147.2 108.7" stroke="#7c7c7c" stroke-width="1.25"/>
<circle cx="1147.2" cy="108.7" r="1.0" fill="#858585" stroke="none"/>
<path d="M1165.9 127.8 L1179.6 136.3" stroke="#7c7c7c" stroke-width="1.25"/>
<circle cx="1179.6" cy="136.3" r="1.0" fill="#858585" stroke="none"/>
<path d="M1138.4 150.3 L1163.3 168.3" stroke="#7c7c7c" stroke-width="1.25"/>
<circle cx="1163.3" cy="168.3" r="1.0" fill="#858585" stroke="none"/>
<path d="M1093 162.5 L1106 175.1" stroke="#7c7c7c" stroke-width="1.25"/>
<circle cx="1106" cy="175.1" r="1.0" fill="#858585" stroke="none"/>
<path d="M988.9 185.3 L993.6 190.2" stroke="#7c7c7c" stroke-width="1.25"/>
<circle cx="993.6" cy="190.2" r="1.0" fill="#858585" stroke="none"/>
<path d="M777.83 288.11 L778.03 286.52 L778.35 284.92 L778.77 283.34 L779.29 281.77 L779.92 280.23 L780.65 278.72 L781.47 277.24 L782.39 275.8 L783.4 274.41 L784.49 273.07 L785.66 271.79 L786.9 270.58 L788.21 269.43 L789.58 268.36 L791 267.37 L792.47 266.46 L793.99 265.64 L795.54 264.91 L797.11 264.27 L798.71 263.74 L800.32 263.3 L801.94 262.96 L803.56 262.72 L805.18 262.59 L806.78 262.57 L808.36 262.64 L809.92 262.83 L811.44 263.11 L812.93 263.5 L814.38 263.99 L815.78 264.58 L817.13 265.26 L818.42 266.04 L819.65 266.91 L820.81 267.86 L821.9 268.89 L822.92 270 L823.86 271.18 L824.72 272.42 L825.5 273.73 L826.19 275.1 L826.79 276.51 L827.3 277.97 L827.72 279.47 L828.04 281 L828.28 282.55 L828.41 284.13 L828.46 285.72 L828.4 287.32 L828.25 288.91 L828.01 290.5 L827.68 292.08 L827.25 293.65 L826.73 295.18 L826.12 296.69 L825.42 298.16 L824.64 299.59 L823.78 300.98 L822.84 302.31 L821.82 303.58 L820.73 304.79 L819.58 305.93 L818.35 307 L817.07 308 L815.74 308.91 L814.35 309.74 L812.92 310.49 L811.44 311.14 L809.93 311.7 L808.4 312.17 L806.83 312.54 L805.25 312.81 L803.66 312.99 L802.07 313.06 L800.47 313.04 L798.88 312.91 L797.3 312.69 L795.75 312.37 L794.21 311.95 L792.72 311.43 L791.26 310.82 L789.84 310.12 L788.48 309.34 L787.18 308.46 L785.93 307.51 L784.76 306.48 L783.66 305.37 L782.65 304.19 L781.71 302.95 L780.87 301.65 L780.12 300.29 L779.47 298.88 L778.91 297.43 L778.46 295.94 L778.12 294.42 L777.88 292.87 L777.76 291.3 L777.74 289.71 L777.83 288.11" stroke="#54c568" stroke-width="2.08" stroke-linejoin="round"/>
<path d="M750.68 252.53 L751.14 250.93 L751.72 249.34 L752.41 247.75 L753.2 246.17 L754.09 244.62 L755.09 243.09 L756.17 241.6 L757.35 240.14 L758.6 238.73 L759.93 237.37 L761.34 236.07 L762.8 234.84 L764.32 233.67 L765.89 232.57 L767.51 231.56 L769.15 230.63 L770.82 229.79 L772.51 229.04 L774.21 228.38 L775.91 227.83 L777.61 227.38 L779.29 227.03 L780.96 226.79 L782.6 226.65 L784.2 226.63 L785.77 226.71 L787.29 226.9 L788.77 227.19 L790.18 227.59 L791.53 228.1 L792.82 228.7 L794.04 229.4 L795.18 230.2 L796.25 231.08 L797.23 232.06 L798.13 233.11 L798.94 234.24 L799.66 235.45 L800.3 236.72 L800.84 238.05 L801.28 239.43 L801.63 240.86 L801.89 242.34 L802.04 243.85 L802.11 245.39 L802.07 246.96 L801.94 248.54 L801.72 250.13 L801.4 251.73 L800.99 253.33 L800.48 254.91 L799.89 256.49 L799.21 258.04 L798.45 259.56 L797.6 261.06 L796.68 262.51 L795.68 263.93 L794.61 265.29 L793.46 266.6 L792.25 267.85 L790.99 269.04 L789.66 270.16 L788.28 271.21 L786.85 272.18 L785.39 273.07 L783.88 273.89 L782.34 274.61 L780.77 275.25 L779.18 275.8 L777.58 276.25 L775.96 276.62 L774.35 276.88 L772.73 277.05 L771.12 277.12 L769.53 277.1 L767.96 276.98 L766.41 276.76 L764.9 276.45 L763.43 276.04 L762 275.54 L760.63 274.94 L759.32 274.26 L758.07 273.49 L756.89 272.64 L755.78 271.7 L754.76 270.69 L753.83 269.61 L752.98 268.45 L752.23 267.23 L751.59 265.95 L751.04 264.61 L750.6 263.22 L750.27 261.79 L750.06 260.32 L749.95 258.81 L749.96 257.27 L750.08 255.7 L750.32 254.12 L750.68 252.53" stroke="#228c8d" stroke-width="2.08" stroke-linejoin="round"/>
<path d="M1041.67 138.34 L1039.71 136.8 L1037.82 135.24 L1036.01 133.67 L1034.29 132.11 L1032.67 130.55 L1031.14 129 L1029.73 127.47 L1028.43 125.96 L1027.26 124.48 L1026.21 123.05 L1025.3 121.66 L1024.54 120.33 L1023.92 119.06 L1023.47 117.86 L1023.17 116.73 L1023.05 115.69 L1023.1 114.75 L1023.33 113.9 L1023.74 113.15 L1024.33 112.51 L1025.11 111.99 L1026.08 111.59 L1027.24 111.31 L1028.58 111.15 L1030.1 111.12 L1031.8 111.22 L1033.67 111.43 L1035.69 111.78 L1037.87 112.24 L1040.19 112.82 L1042.63 113.51 L1045.18 114.31 L1047.83 115.21 L1050.56 116.2 L1053.36 117.29 L1056.2 118.45 L1059.08 119.69 L1061.97 120.99 L1064.85 122.35 L1067.73 123.76 L1070.57 125.22 L1073.36 126.71 L1076.09 128.23 L1078.74 129.77 L1081.31 131.33 L1083.78 132.89 L1086.15 134.46 L1088.39 136.02 L1090.51 137.57 L1092.49 139.11 L1094.34 140.62 L1096.04 142.11 L1097.58 143.57 L1098.98 144.99 L1100.21 146.37 L1101.29 147.71 L1102.2 148.99 L1102.96 150.23 L1103.55 151.41 L1103.98 152.53 L1104.25 153.58 L1104.36 154.58 L1104.32 155.5 L1104.12 156.36 L1103.78 157.14 L1103.28 157.84 L1102.65 158.47 L1101.88 159.03 L1100.97 159.5 L1099.94 159.89 L1098.78 160.2 L1097.51 160.43 L1096.13 160.58 L1094.63 160.64 L1093.04 160.62 L1091.36 160.52 L1089.59 160.33 L1087.73 160.06 L1085.8 159.71 L1083.8 159.27 L1081.74 158.76 L1079.63 158.17 L1077.46 157.5 L1075.25 156.75 L1073.01 155.94 L1070.74 155.05 L1068.45 154.09 L1066.14 153.06 L1063.82 151.97 L1061.5 150.83 L1059.19 149.62 L1056.88 148.36 L1054.6 147.04 L1052.34 145.69 L1050.11 144.28 L1047.93 142.84 L1045.79 141.37 L1043.7 139.87 L1041.67 138.34" stroke="#1fa188" stroke-width="2.08" stroke-linejoin="round"/>
<path d="M1091.15 143.33 L1089.39 141.38 L1087.62 139.43 L1085.84 137.5 L1084.05 135.57 L1082.26 133.66 L1080.47 131.75 L1078.67 129.85 L1076.87 127.97 L1075.06 126.09 L1073.26 124.23 L1071.47 122.38 L1069.68 120.54 L1067.89 118.72 L1066.12 116.91 L1064.36 115.12 L1062.61 113.34 L1060.88 111.59 L1059.16 109.85 L1057.48 108.13 L1055.81 106.44 L1054.18 104.77 L1052.58 103.12 L1051.02 101.5 L1049.5 99.91 L1048.03 98.35 L1046.61 96.82 L1045.25 95.33 L1043.95 93.87 L1042.73 92.45 L1041.58 91.07 L1040.52 89.74 L1039.55 88.45 L1038.69 87.22 L1037.93 86.04 L1037.3 84.91 L1036.8 83.85 L1036.44 82.85 L1036.23 81.92 L1036.19 81.05 L1036.32 80.27 L1036.65 79.56 L1037.17 78.93 L1037.9 78.38 L1038.85 77.92 L1040.03 77.55 L1041.46 77.27 L1043.13 77.08 L1045.06 76.99 L1047.25 76.99 L1049.7 77.08 L1052.43 77.27 L1055.42 77.55 L1058.68 77.91" stroke="#1fa188" stroke-width="1.67" stroke-dasharray="1.39 2.29"/>
<path d="M743.79 78.37 L744.29 78.92 L744.53 79.55 L744.54 80.26 L744.33 81.04 L743.91 81.9 L743.3 82.83 L742.51 83.83 L741.54 84.9 L740.42 86.02 L739.15 87.2 L737.75 88.43 L736.22 89.72 L734.59 91.05 L732.85 92.43 L731.01 93.84 L729.09 95.3 L727.09 96.8 L725.02 98.33 L722.88 99.89 L720.69 101.48 L718.44 103.1 L716.15 104.74 L713.82 106.41 L711.45 108.11 L709.04 109.82 L706.61 111.56 L704.16 113.32 L701.68 115.09 L699.19 116.88 L696.68 118.69 L694.16 120.51 L691.63 122.35 L689.09 124.2 L686.55 126.06 L684.01 127.94 L681.46 129.82 L678.92 131.72 L676.39 133.63 L673.86 135.54 L671.33 137.47 L668.82 139.4 L666.31 141.35 L663.82 143.3 L661.34 145.25 L658.88 147.22" stroke="#1fa188" stroke-width="1.67" stroke-dasharray="1.39 2.29"/>
<path d="M659.7 147 L653 152" stroke="#1fa188" stroke-width="1.39"/>
<rect x="651.8" y="150.8" width="2.4" height="2.4" fill="#ff6347" stroke="none"/>
<path d="M1088.05 143.33 h6.2 M1091.15 140.23 v6.2" stroke="#ff0000" stroke-width="1.25"/>
<path d="M774.45 250.43 L776.05 249 L777.67 247.58 L779.29 246.17 L780.91 244.75 L782.54 243.34 L784.18 241.93 L785.82 240.53 L787.47 239.13 L789.13 237.73 L790.79 236.34 L792.45 234.95 L794.12 233.57 L795.79 232.19 L797.47 230.81 L799.15 229.44 L800.84 228.08 L802.53 226.72 L804.22 225.36 L805.92 224.01 L807.62 222.66 L809.33 221.32 L811.04 219.99 L812.75 218.66 L814.46 217.33 L816.18 216.01 L817.9 214.7 L819.62 213.4 L821.35 212.1 L823.07 210.8 L824.8 209.52 L826.53 208.24 L828.26 206.96 L829.99 205.7 L831.73 204.44 L833.46 203.19 L835.2 201.94 L836.94 200.71 L838.68 199.48 L840.42 198.26 L842.16 197.05 L843.89 195.85 L845.63 194.65 L847.37 193.47 L849.11 192.29 L850.85 191.13 L852.59 189.97 L854.33 188.83 L856.07 187.69 L857.81 186.56 L859.55 185.45 L861.29 184.34 L863.02 183.25 L864.76 182.17 L866.49 181.09 L868.23 180.04 L869.96 178.99 L871.69 177.95 L873.42 176.93 L875.15 175.92 L876.88 174.93 L878.61 173.94 L880.34 172.97 L882.06 172.02 L883.79 171.08 L885.51 170.15 L887.23 169.24 L888.95 168.35 L890.67 167.47 L892.39 166.6 L894.11 165.75 L895.83 164.92 L897.55 164.1 L899.27 163.31 L900.98 162.52 L902.7 161.76 L904.42 161.02 L906.13 160.29 L907.85 159.58 L909.57 158.89 L911.29 158.22 L913.01 157.57 L914.73 156.94 L916.45 156.33 L918.18 155.74 L919.9 155.17 L921.63 154.62 L923.36 154.09 L925.09 153.58 L926.83 153.1 L928.57 152.64 L930.32 152.2 L932.06 151.78 L933.82 151.38 L935.57 151.01 L937.34 150.66 L939.1 150.34 L940.88 150.04 L942.66 149.76 L944.44 149.5" stroke="#228c8d" stroke-width="1.67" stroke-dasharray="1.39 2.29"/>
<path d="M944.4 149.4 L954 149" stroke="#228c8d" stroke-width="1.39"/>
<rect x="952.8" y="147.8" width="2.4" height="2.4" fill="#ff6347" stroke="none"/>
<path d="M771.35 250.43 h6.2 M774.45 247.33 v6.2" stroke="#ff0000" stroke-width="1.25"/>
<path d="M787.79 280.41 L789.8 277.38 L791.84 274.36 L793.91 271.34 L796.01 268.33 L798.13 265.31 L800.28 262.31 L802.46 259.3 L804.66 256.31 L806.88 253.31 L809.13 250.33 L811.4 247.34 L813.7 244.37 L816.01 241.4 L818.35 238.44 L820.7 235.49 L823.07 232.54 L825.46 229.6 L827.87 226.67 L830.3 223.75 L832.74 220.84 L835.19 217.94 L837.66 215.05 L840.14 212.18 L842.63 209.31 L845.14 206.46 L847.65 203.62 L850.18 200.8 L852.71 197.99 L855.25 195.19 L857.8 192.42 L860.36 189.66 L862.92 186.92 L865.48 184.2 L868.05 181.5 L870.62 178.82 L873.2 176.16 L875.78 173.53 L878.36 170.93 L880.94 168.35 L883.52 165.81 L886.1 163.29 L888.68 160.81 L891.26 158.36 L893.84 155.94 L896.42 153.57 L899 151.24 L901.57 148.95 L904.15 146.7 L906.73 144.51 L909.31 142.37 L911.89 140.28 L914.47 138.25 L917.06 136.28 L919.65 134.37 L922.26 132.53 L924.87 130.77 L927.49 129.08 L930.13 127.46 L932.79 125.93 L935.47 124.49 L938.18 123.14 L940.92 121.88 L943.69 120.72 L946.5 119.67 L949.36 118.72 L952.27 117.88 L955.23 117.15 L958.25 116.53 L961.34 116.04 L964.51 115.66 L967.75 115.41 L971.07 115.27 L974.49 115.26 L977.99 115.37 L981.59 115.6 L985.3 115.96 L989.1 116.43 L993.01 117.02 L997.02 117.73 L1001.14 118.55 L1005.37 119.48 L1009.71 120.52 L1014.14 121.66 L1018.68 122.9 L1023.32 124.23 L1028.06 125.66 L1032.89 127.17 L1037.81 128.77 L1042.81 130.45 L1047.9 132.2 L1053.06 134.02 L1058.29 135.92 L1063.58 137.87 L1068.94 139.89 L1074.35 141.97 L1079.81 144.11 L1085.32 146.29 L1090.87 148.52 L1096.44 150.81" stroke="#54c568" stroke-width="1.67" stroke-dasharray="1.39 2.29"/>
<path d="M1096.4 150.7 L1110 156.9" stroke="#54c568" stroke-width="1.39"/>
<rect x="1108.8" y="155.7" width="2.4" height="2.4" fill="#ff6347" stroke="none"/>
<path d="M784.69 280.41 h6.2 M787.79 277.31 v6.2" stroke="#ff0000" stroke-width="1.25"/>
</g>
<g id="skylabels" font-family="'DejaVu Sans','Liberation Sans',sans-serif" font-size="10.42" fill="#ffffff" text-anchor="middle">
<text x="803.11" y="290.61">STA</text>
<text x="776.11" y="254.68">CTA</text>
<text x="1062.29" y="138.68">DRA</text>
</g>
</svg>
</body></html>
